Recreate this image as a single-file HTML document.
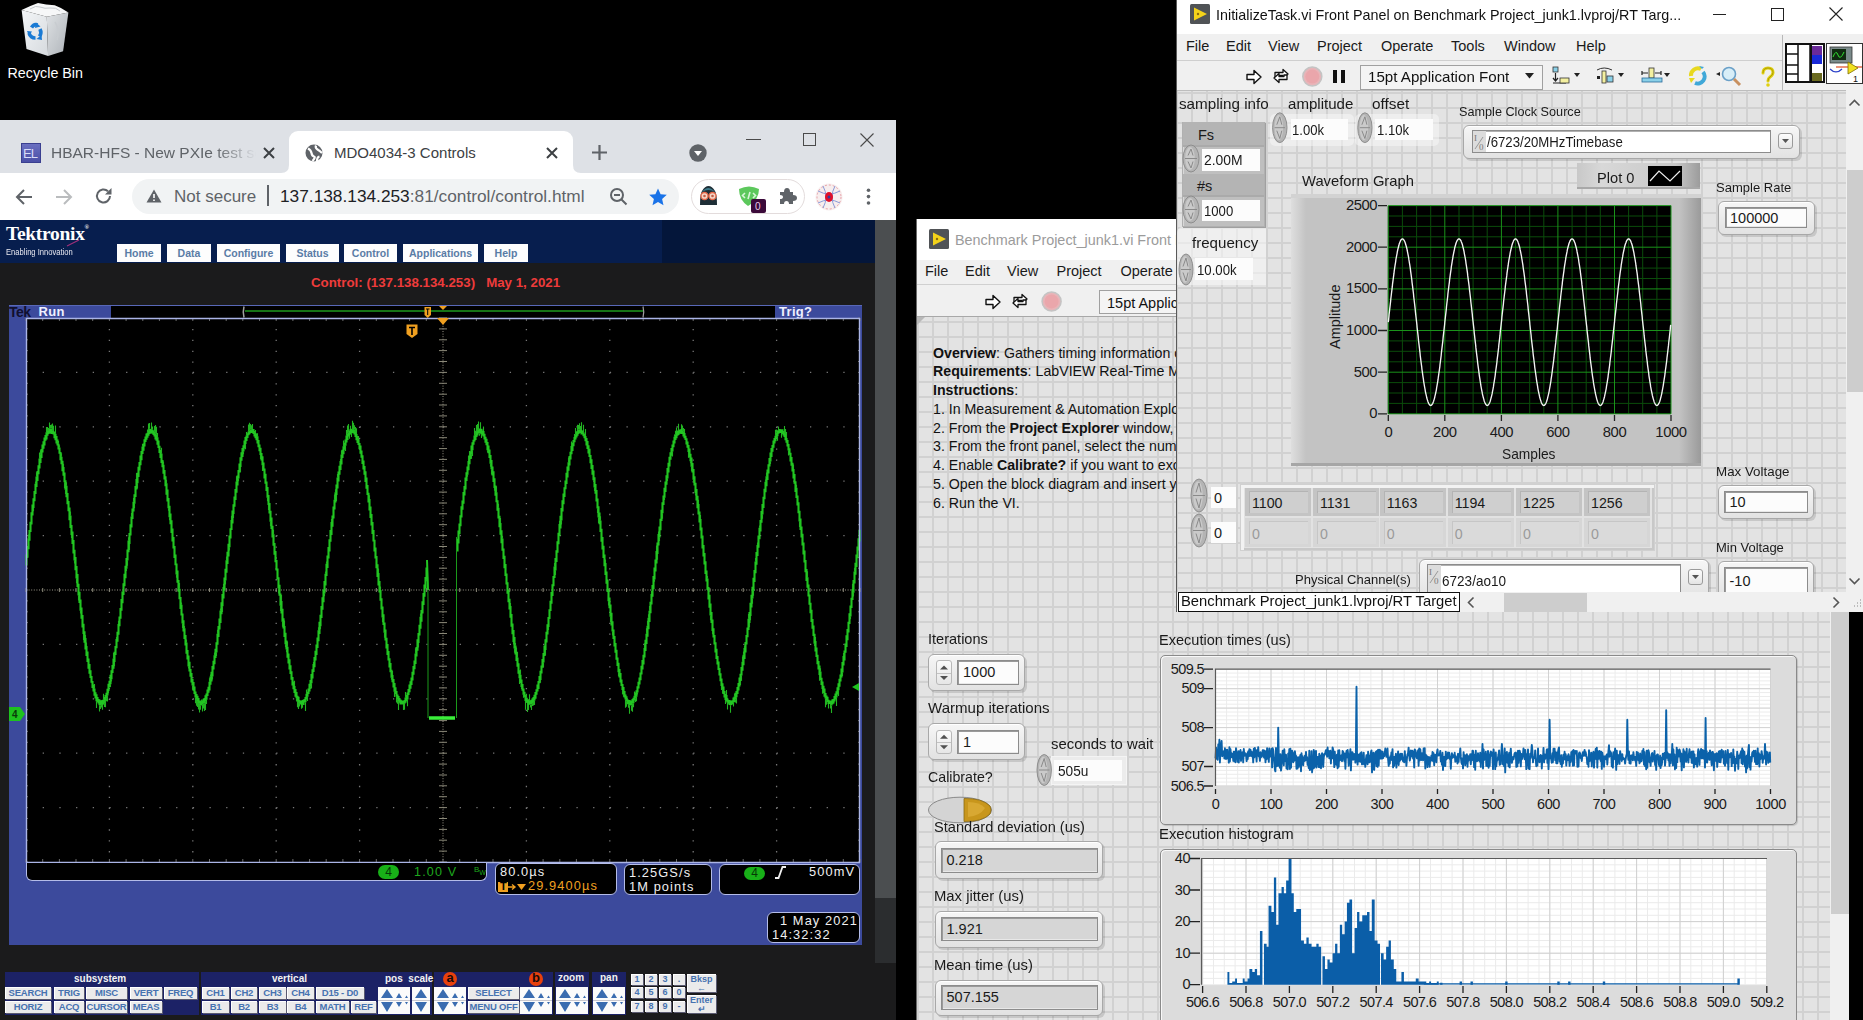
<!DOCTYPE html><html><head><meta charset="utf-8"><style>

*{margin:0;padding:0;box-sizing:border-box}
html,body{width:1863px;height:1020px;overflow:hidden;background:#000;font-family:"Liberation Sans",sans-serif}
.a{position:absolute}
.t{position:absolute;white-space:nowrap;line-height:1}
svg{position:absolute;overflow:visible}


.cw{left:0;top:120px;width:896px;height:900px;background:#1b1b1c;overflow:hidden}
.tabs{left:0;top:0;width:896px;height:53px;background:#dee1e6}
.tbar{left:0;top:53px;width:896px;height:47px;background:#fff}
.page{left:0;top:100px;width:875px;height:800px;background:#1b1b1c}
.tekhdr{left:0;top:0;width:875px;height:43px;background:#071e4e}
.tbtn{position:absolute;top:24px;height:18px;background:#fdfdfd;color:#5a7ca6;font-weight:bold;font-size:10.5px;text-align:center;line-height:19px}
.scope{left:9px;top:85px;width:853px;height:640px;background:#3c4a9c}


.lvlab{position:absolute;white-space:nowrap;line-height:1;font-size:14.5px;color:#1a1a1a}
.grid{position:absolute;background-color:#e3e3e3;
 background-image:linear-gradient(90deg,#d1d1d1 2px,transparent 2px),linear-gradient(#d1d1d1 2px,transparent 2px);
 background-size:15px 15px}






</style></head><body>

<div class="a" style="left:0;top:0;width:90px;height:90px">
 <svg width="90" height="90" style="left:0;top:0">
  <defs>
   <linearGradient id="rbl" x1="0" x2="1" y1="0" y2="1"><stop offset="0" stop-color="#f4f6f8"/><stop offset="1" stop-color="#d6dade"/></linearGradient>
   <linearGradient id="rbr" x1="0" x2="1" y1="0" y2="1"><stop offset="0" stop-color="#dfe2e5"/><stop offset="1" stop-color="#aeb3b8"/></linearGradient>
  </defs>
  <path d="M21.6 10.1L46.8 16.8L48.1 56L26.5 49Z" fill="url(#rbl)"/>
  <path d="M46.8 16.8L68.4 12.4L63.1 51.2L48.1 56Z" fill="url(#rbr)"/>
  <path d="M21.6 10.1Q30 6 38 3.1Q46 5 54.7 5.3Q62 8 68.4 12.4L46.8 16.8Z" fill="#f6f7f8"/>
  <path d="M30 9Q36 5 40 7Q45 9 50 8Q56 7 60 11" stroke="#c4c8cc" stroke-width="1" fill="none"/>
  <path d="M55 22Q60 30 57 40" stroke="#c8ccd0" stroke-width="1.5" fill="none"/>
  <g fill="none" stroke="#1a7ad4" stroke-width="3.6">
   <path d="M31.5 27.5Q34 23.5 37.5 25"/>
   <path d="M40 29Q42 33 39.5 36.5"/>
   <path d="M35.5 38Q30.5 38 29 33"/>
  </g>
  <path d="M36 22.5L40.5 26.5L35 28Z M41.5 35L36.5 39L42 40Z M27 31L29 36L32 31.5Z" fill="#1a7ad4"/>
 </svg>
 <div class="t" style="left:7.5px;top:66px;color:#fff;font-size:14.3px;text-shadow:0 0 2px #000">Recycle Bin</div>
</div>

<div class="a cw">
<div class="a tabs">
<div class="a" style="left:21px;top:23px;width:20px;height:20px;background:linear-gradient(#6a6fc0,#4a4fa6);border:1px solid #3a3f90"></div>
<div class="t" style="left:23px;top:27px;color:#d8dcf8;font-size:13px;letter-spacing:-1px">EL</div>
<div class="t" style="left:51px;top:25px;font-size:15.5px;color:#5f6368;width:205px;overflow:hidden;-webkit-mask-image:linear-gradient(90deg,#000 80%,transparent)">HBAR-HFS - New PXIe test set</div>
<svg style="left:263px;top:27px" width="12" height="12"><path d="M1 1L11 11M11 1L1 11" stroke="#3c4043" stroke-width="2"/></svg>
<div class="a" style="left:289px;top:11px;width:284px;height:42px;background:#fff;border-radius:9px 9px 0 0"></div>
<svg style="left:281px;top:45px" width="8" height="8"><path d="M0 8Q8 8 8 0V8Z" fill="#fff"/></svg>
<svg style="left:573px;top:45px" width="8" height="8"><path d="M8 8Q0 8 0 0V8Z" fill="#fff"/></svg>
<svg style="left:305px;top:24px" width="18" height="18" viewBox="0 0 18 18"><circle cx="9" cy="9" r="8.5" fill="#5f6368"/><path d="M3 4.5Q6 6 6.5 9T9 12.5T7.5 17M11 1.5Q10 4 12.5 5.5T17 9M12 17Q12 13 14.5 12.5" stroke="#fff" stroke-width="2.2" fill="none"/></svg>
<div class="t" style="left:334px;top:25px;font-size:15px;color:#3c4043">MDO4034-3 Controls</div>
<svg style="left:546px;top:27px" width="12" height="12"><path d="M1 1L11 11M11 1L1 11" stroke="#3c4043" stroke-width="2"/></svg>
<svg style="left:592px;top:25px" width="15" height="15"><path d="M7.5 0V15M0 7.5H15" stroke="#5f6368" stroke-width="2.2"/></svg>
<svg style="left:689px;top:24px" width="18" height="18"><circle cx="9" cy="9" r="8.7" fill="#5f6368"/><path d="M5 7H13L9 12Z" fill="#fff"/></svg>
<div class="a" style="left:746px;top:19px;width:15px;height:1px;background:#4a4a4a"></div>
<div class="a" style="left:803px;top:13px;width:13px;height:13px;border:1px solid #4a4a4a"></div>
<svg style="left:860px;top:13px" width="14" height="14"><path d="M0.5 0.5L13.5 13.5M13.5 0.5L0.5 13.5" stroke="#4a4a4a" stroke-width="1.1"/></svg>
</div>
<div class="a tbar">
<svg style="left:15px;top:15px" width="18" height="18" viewBox="0 0 18 18"><path d="M17 9H2.5M9 2L2 9L9 16" stroke="#5f6368" stroke-width="2" fill="none"/></svg>
<svg style="left:55px;top:15px" width="18" height="18" viewBox="0 0 18 18"><path d="M1 9H15.5M9 2L16 9L9 16" stroke="#babcbe" stroke-width="2" fill="none"/></svg>
<svg style="left:95px;top:14px" width="18" height="18" viewBox="0 0 18 18"><path d="M15 9A6.5 6.5 0 1 1 13 4.3" stroke="#5f6368" stroke-width="2" fill="none"/><path d="M16.5 1V7.5H10Z" fill="#5f6368"/></svg>
<div class="a" style="left:132px;top:6px;width:547px;height:35px;background:#f1f3f4;border-radius:18px"></div>
<svg style="left:146px;top:16px" width="16" height="14" viewBox="0 0 16 14"><path d="M8 0.5L15.5 13.5H0.5Z" fill="#5f6368"/><path d="M8 5V9M8 10.5V12" stroke="#fff" stroke-width="1.6"/></svg>
<div class="t" style="left:174px;top:15px;font-size:17px;color:#5f6368">Not secure</div>
<div class="a" style="left:267px;top:12px;width:2px;height:21px;background:#5f6368"></div>
<div class="t" style="left:280px;top:15px;font-size:17.3px;color:#202124">137.138.134.253<span style="color:#5f6368">:81/control/control.html</span></div>
<svg style="left:609px;top:14px" width="20" height="20" viewBox="0 0 20 20"><circle cx="8" cy="8" r="6" stroke="#5f6368" stroke-width="2" fill="none"/><path d="M5 8H11M12.5 12.5L17.5 17.5" stroke="#5f6368" stroke-width="2"/></svg>
<svg style="left:648px;top:14px" width="20" height="20" viewBox="0 0 20 20"><path d="M10 1.5L12.6 7.3L18.8 7.8L14.1 12L15.5 18.2L10 15L4.5 18.2L5.9 12L1.2 7.8L7.4 7.3Z" fill="#1a73e8"/></svg>
<div class="a" style="left:691px;top:6px;width:114px;height:35px;border:1px solid #e3dcdc;border-radius:18px"></div>
<svg style="left:698px;top:13px" width="21" height="20" viewBox="0 0 21 20"><path d="M2 19Q2 8 4 5Q7 0 10.5 0Q14 0 17 5Q19 8 19 19Z" fill="#1e2e36"/><path d="M4 6Q10 -2 17 6Q14 4 10.5 4Q7 4 4 6Z" fill="#3d7a8a"/><circle cx="6.5" cy="10" r="3.5" fill="#f6d6c8" stroke="#e86a4a" stroke-width="1.3"/><circle cx="14.5" cy="10" r="3.5" fill="#f6d6c8" stroke="#e86a4a" stroke-width="1.3"/><circle cx="6.5" cy="10" r="1.3" fill="#c0604a"/><circle cx="14.5" cy="10" r="1.3" fill="#c0604a"/></svg>
<svg style="left:738px;top:13px" width="22" height="21" viewBox="0 0 22 21"><path d="M1 3Q11 -2 21 3Q21 14 10 20Q1 14 1 3Z" fill="#5cc85c"/><path d="M7 7L4.5 9.5L7 12M15 7L17.5 9.5L15 12M12 6L10 13" stroke="#d8f5d8" stroke-width="1.6" fill="none"/></svg>
<div class="a" style="left:751px;top:26px;width:15px;height:14px;background:#3b0a3a;border-radius:2px"></div>
<div class="t" style="left:755px;top:29px;font-size:10px;color:#e8c8e8">0</div>
<svg style="left:780px;top:14px" width="18" height="18" viewBox="0 0 18 18"><path d="M0 5H4Q4 1 7 1Q10 1 10 5H13V8Q17 8 17 11Q17 14 13 14V17H9Q9 14 6.5 14Q4 14 4 17H0V12Q3 12 3 10Q3 8 0 8Z" fill="#5f6368"/></svg>
<svg style="left:815px;top:183px;top:10px" width="28" height="28" viewBox="0 0 28 28"><circle cx="14" cy="14" r="13.5" fill="#f7eeee"/><circle cx="14" cy="14" r="12" fill="none" stroke="#e8a0a8" stroke-width="1" stroke-dasharray="2 2"/><path d="M3 8Q14 14 25 8M3 20Q14 14 25 20M8 3Q14 14 8 25M20 3Q14 14 20 25" stroke="#8a9ad8" stroke-width="1" fill="none"/><ellipse cx="14" cy="14" rx="4" ry="5" fill="#e0102a"/><circle cx="14" cy="14" r="1.5" fill="#3040a0"/></svg>
<svg style="left:866px;top:15px" width="5" height="18"><circle cx="2.5" cy="2.2" r="1.8" fill="#5f6368"/><circle cx="2.5" cy="8.6" r="1.8" fill="#5f6368"/><circle cx="2.5" cy="15" r="1.8" fill="#5f6368"/></svg>
</div>
<div class="a page">
<div class="a tekhdr">
<div class="tbtn" style="left:117px;width:44px">Home</div><div class="tbtn" style="left:167px;width:44px">Data</div><div class="tbtn" style="left:217px;width:63px">Configure</div><div class="tbtn" style="left:286px;width:53px">Status</div><div class="tbtn" style="left:344px;width:53px">Control</div><div class="tbtn" style="left:403px;width:75px">Applications</div><div class="tbtn" style="left:484px;width:44px">Help</div>
</div>
<div class="a" style="left:0;top:-220px;width:1863px;height:1020px">
<div class="a" style="left:662px;top:220px;width:213px;height:43px;background:#04163a"></div>
<div class="t" style="left:6px;top:224px;color:#fff;font-family:'Liberation Serif',serif;font-weight:bold;font-size:19.5px;letter-spacing:-0.3px">Tektronix<span style="font-size:6px;vertical-align:top">&reg;</span></div>
<div class="t" style="left:6px;top:247px;color:#e8e8f0;font-size:9.5px;transform:scaleX(0.8);transform-origin:0 0">Enabling Innovation</div>
<svg style="left:66px;top:239px" width="14" height="8"><path d="M1 7L13 1" stroke="#a0307a" stroke-width="1.2"/></svg>
<div class="t" style="left:311px;top:276px;color:#ee3b3b;font-weight:bold;font-size:13.3px">Control: (137.138.134.253)&nbsp;&nbsp; May 1, 2021</div>
<div class="a" style="left:9px;top:305px;width:853px;height:640px;background:#3c4a9c"></div>
<div class="a" style="left:111px;top:306px;width:664px;height:12px;background:#000"></div>
<div class="a" style="left:9px;top:305px;width:853px;height:1px;background:#5868b8"></div>
<div class="t" style="left:9px;top:305px;color:#101030;font-size:14px;font-weight:bold;letter-spacing:-0.5px">Tek</div>
<div class="t" style="left:38.5px;top:304.7px;color:#f0f0ff;font-size:13px;font-weight:bold;letter-spacing:0.3px">Run</div>
<div class="t" style="left:779px;top:304.7px;color:#f0f0ff;font-size:13px;font-weight:bold;letter-spacing:0.3px">Trig?</div>
<svg style="left:0;top:0" width="900" height="400"><path d="M244 306.5Q242.5 312 244 317.5" stroke="#a0a0a0" stroke-width="1.5" fill="none"/><path d="M245 311H643" stroke="#1e9a1e" stroke-width="1.4"/><path d="M643 306.5Q644.5 312 643 317.5" stroke="#a0a0a0" stroke-width="1.2" fill="none"/><path d="M439 306H447L443 310Z" fill="#f0a020"/><path d="M424.5 307H431V315L427.7 318L424.5 315Z" fill="#f0a020"/><path d="M426 309H429.5M427.7 309V315" stroke="#000" stroke-width="1"/></svg>
<svg style="left:0;top:0" width="1863" height="1020">
<rect x="26" y="318" width="834" height="544" fill="#000"/>
<path d="M109.4 318V862M192.8 318V862M276.2 318V862M359.6 318V862M526.4 318V862M609.8 318V862M693.2 318V862M776.6 318V862" stroke="#767676" stroke-width="1.3" stroke-dasharray="1.3 9.58"/>
<path d="M26 372.4H860M26 426.8H860M26 481.2H860M26 535.6H860M26 644.4H860M26 698.8H860M26 753.2H860M26 807.6H860" stroke="#767676" stroke-width="1.3" stroke-dasharray="1.3 15.38"/>
<path d="M443.0 318V862M26 590.0H860" stroke="#9a9688" stroke-width="1" stroke-dasharray="1 1.6"/>
<path d="M439.0 318.0h8M439.0 328.9h8M439.0 339.8h8M439.0 350.6h8M439.0 361.5h8M439.0 372.4h8M439.0 383.3h8M439.0 394.2h8M439.0 405.0h8M439.0 415.9h8M439.0 426.8h8M439.0 437.7h8M439.0 448.6h8M439.0 459.4h8M439.0 470.3h8M439.0 481.2h8M439.0 492.1h8M439.0 503.0h8M439.0 513.8h8M439.0 524.7h8M439.0 535.6h8M439.0 546.5h8M439.0 557.4h8M439.0 568.2h8M439.0 579.1h8M439.0 590.0h8M439.0 600.9h8M439.0 611.8h8M439.0 622.6h8M439.0 633.5h8M439.0 644.4h8M439.0 655.3h8M439.0 666.2h8M439.0 677.0h8M439.0 687.9h8M439.0 698.8h8M439.0 709.7h8M439.0 720.6h8M439.0 731.4h8M439.0 742.3h8M439.0 753.2h8M439.0 764.1h8M439.0 775.0h8M439.0 785.8h8M439.0 796.7h8M439.0 807.6h8M439.0 818.5h8M439.0 829.4h8M439.0 840.2h8M439.0 851.1h8M439.0 862.0h8M26.0 588.0v4M42.7 588.0v4M59.4 588.0v4M76.0 588.0v4M92.7 588.0v4M109.4 588.0v4M126.1 588.0v4M142.8 588.0v4M159.4 588.0v4M176.1 588.0v4M192.8 588.0v4M209.5 588.0v4M226.2 588.0v4M242.8 588.0v4M259.5 588.0v4M276.2 588.0v4M292.9 588.0v4M309.6 588.0v4M326.2 588.0v4M342.9 588.0v4M359.6 588.0v4M376.3 588.0v4M393.0 588.0v4M409.6 588.0v4M426.3 588.0v4M443.0 588.0v4M459.7 588.0v4M476.4 588.0v4M493.0 588.0v4M509.7 588.0v4M526.4 588.0v4M543.1 588.0v4M559.8 588.0v4M576.4 588.0v4M593.1 588.0v4M609.8 588.0v4M626.5 588.0v4M643.2 588.0v4M659.8 588.0v4M676.5 588.0v4M693.2 588.0v4M709.9 588.0v4M726.6 588.0v4M743.2 588.0v4M759.9 588.0v4M776.6 588.0v4M793.3 588.0v4M810.0 588.0v4M826.6 588.0v4M843.3 588.0v4M860.0 588.0v4" stroke="#8a8878" stroke-width="1"/>
<path d="M26 318.0h2M858 318.0h2M26 328.9h2M858 328.9h2M26 339.8h2M858 339.8h2M26 350.6h2M858 350.6h2M26 361.5h2M858 361.5h2M26 372.4h2M858 372.4h2M26 383.3h2M858 383.3h2M26 394.2h2M858 394.2h2M26 405.0h2M858 405.0h2M26 415.9h2M858 415.9h2M26 426.8h2M858 426.8h2M26 437.7h2M858 437.7h2M26 448.6h2M858 448.6h2M26 459.4h2M858 459.4h2M26 470.3h2M858 470.3h2M26 481.2h2M858 481.2h2M26 492.1h2M858 492.1h2M26 503.0h2M858 503.0h2M26 513.8h2M858 513.8h2M26 524.7h2M858 524.7h2M26 535.6h2M858 535.6h2M26 546.5h2M858 546.5h2M26 557.4h2M858 557.4h2M26 568.2h2M858 568.2h2M26 579.1h2M858 579.1h2M26 590.0h2M858 590.0h2M26 600.9h2M858 600.9h2M26 611.8h2M858 611.8h2M26 622.6h2M858 622.6h2M26 633.5h2M858 633.5h2M26 644.4h2M858 644.4h2M26 655.3h2M858 655.3h2M26 666.2h2M858 666.2h2M26 677.0h2M858 677.0h2M26 687.9h2M858 687.9h2M26 698.8h2M858 698.8h2M26 709.7h2M858 709.7h2M26 720.6h2M858 720.6h2M26 731.4h2M858 731.4h2M26 742.3h2M858 742.3h2M26 753.2h2M858 753.2h2M26 764.1h2M858 764.1h2M26 775.0h2M858 775.0h2M26 785.8h2M858 785.8h2M26 796.7h2M858 796.7h2M26 807.6h2M858 807.6h2M26 818.5h2M858 818.5h2M26 829.4h2M858 829.4h2M26 840.2h2M858 840.2h2M26 851.1h2M858 851.1h2M26 862.0h2M858 862.0h2M26.0 318v3M26.0 859v3M42.7 318v3M42.7 859v3M59.4 318v3M59.4 859v3M76.0 318v3M76.0 859v3M92.7 318v3M92.7 859v3M109.4 318v3M109.4 859v3M126.1 318v3M126.1 859v3M142.8 318v3M142.8 859v3M159.4 318v3M159.4 859v3M176.1 318v3M176.1 859v3M192.8 318v3M192.8 859v3M209.5 318v3M209.5 859v3M226.2 318v3M226.2 859v3M242.8 318v3M242.8 859v3M259.5 318v3M259.5 859v3M276.2 318v3M276.2 859v3M292.9 318v3M292.9 859v3M309.6 318v3M309.6 859v3M326.2 318v3M326.2 859v3M342.9 318v3M342.9 859v3M359.6 318v3M359.6 859v3M376.3 318v3M376.3 859v3M393.0 318v3M393.0 859v3M409.6 318v3M409.6 859v3M426.3 318v3M426.3 859v3M443.0 318v3M443.0 859v3M459.7 318v3M459.7 859v3M476.4 318v3M476.4 859v3M493.0 318v3M493.0 859v3M509.7 318v3M509.7 859v3M526.4 318v3M526.4 859v3M543.1 318v3M543.1 859v3M559.8 318v3M559.8 859v3M576.4 318v3M576.4 859v3M593.1 318v3M593.1 859v3M609.8 318v3M609.8 859v3M626.5 318v3M626.5 859v3M643.2 318v3M643.2 859v3M659.8 318v3M659.8 859v3M676.5 318v3M676.5 859v3M693.2 318v3M693.2 859v3M709.9 318v3M709.9 859v3M726.6 318v3M726.6 859v3M743.2 318v3M743.2 859v3M759.9 318v3M759.9 859v3M776.6 318v3M776.6 859v3M793.3 318v3M793.3 859v3M810.0 318v3M810.0 859v3M826.6 318v3M826.6 859v3M843.3 318v3M843.3 859v3M860.0 318v3M860.0 859v3" stroke="#6a6a6a" stroke-width="1"/>
<path d="M26.5 554.6V565.5M27.5 546.6V557.7M28.5 538.2V549.2M29.5 529.9V540.7M30.5 521.7V532.0M31.5 512.3V524.6M32.5 504.5V515.6M33.5 498.2V508.1M34.5 491.1V501.3M35.5 483.8V494.0M36.5 476.6V486.9M37.5 471.0V480.9M38.5 465.2V474.2M39.5 458.5V468.5M40.5 454.2V463.1M41.5 449.1V458.0M42.5 444.5V452.5M43.5 441.3V448.7M44.5 437.5V445.6M45.5 435.1V440.8M46.5 432.2V439.4M47.5 431.1V435.7M48.5 430.9V434.0M49.5 428.8V432.8M50.5 428.6V433.4M51.5 428.6V433.9M52.5 430.2V433.5M53.5 431.0V434.5M54.5 431.9V438.2M55.5 433.8V440.2M56.5 435.9V443.5M57.5 439.6V445.6M58.5 443.7V449.4M59.5 447.6V453.7M60.5 452.1V460.2M61.5 456.7V464.3M62.5 460.7V471.3M63.5 467.1V475.8M64.5 472.5V482.3M65.5 480.2V489.8M66.5 485.7V497.2M67.5 492.9V504.2M68.5 501.1V511.3M69.5 507.5V520.3M70.5 515.6V528.1M71.5 525.1V535.0M72.5 531.6V544.1M73.5 539.9V553.4M74.5 549.7V560.6M75.5 556.9V570.2M76.5 565.9V578.6M77.5 574.1V587.0M78.5 583.7V595.4M79.5 591.7V603.0M80.5 599.4V610.8M81.5 607.4V618.7M82.5 615.1V627.4M83.5 623.7V634.1M84.5 631.3V642.8M85.5 638.0V649.6M86.5 646.1V655.9M87.5 651.6V661.9M88.5 658.6V668.8M89.5 664.0V673.7M90.5 670.3V678.1M91.5 676.1V682.8M92.5 680.9V688.0M93.5 684.5V691.5M94.5 688.4V695.7M95.5 692.2V698.6M96.5 694.2V701.2M97.5 697.1V702.3M98.5 698.9V703.6M99.5 699.6V705.2M100.5 700.2V705.3M101.5 701.1V703.9M102.5 699.9V704.9M103.5 699.6V704.3M104.5 697.1V703.2M105.5 695.0V699.9M106.5 692.7V698.2M107.5 688.8V695.4M108.5 683.8V691.1M109.5 680.7V687.3M110.5 674.8V684.3M111.5 670.2V679.3M112.5 664.9V673.0M113.5 658.5V668.7M114.5 651.7V662.0M115.5 646.1V655.1M116.5 639.1V648.3M117.5 631.7V641.7M118.5 624.1V634.7M119.5 616.4V626.3M120.5 607.9V618.8M121.5 599.0V610.7M122.5 591.6V603.2M123.5 583.3V594.9M124.5 573.8V586.2M125.5 565.8V578.3M126.5 557.9V568.7M127.5 549.6V560.4M128.5 540.4V552.2M129.5 533.1V544.1M130.5 524.2V535.4M131.5 516.6V527.4M132.5 508.4V519.1M133.5 501.7V511.4M134.5 494.3V503.8M135.5 485.9V497.1M136.5 478.9V489.5M137.5 472.7V483.2M138.5 466.8V476.9M139.5 462.0V470.5M140.5 455.5V465.3M141.5 451.1V460.2M142.5 446.5V454.1M143.5 443.6V450.8M144.5 439.2V446.5M145.5 436.5V441.9M146.5 433.5V439.8M147.5 432.8V437.8M148.5 431.0V435.8M149.5 428.8V434.0M150.5 429.0V433.6M151.5 430.1V432.2M152.5 429.8V433.7M153.5 430.6V435.1M154.5 431.8V436.6M155.5 433.8V439.5M156.5 434.6V440.7M157.5 437.3V444.7M158.5 440.6V448.1M159.5 445.8V452.9M160.5 450.1V458.1M161.5 453.4V463.0M162.5 460.1V467.2M163.5 464.8V473.7M164.5 470.0V479.4M165.5 476.3V486.3M166.5 483.2V494.7M167.5 489.6V501.4M168.5 497.9V508.3M169.5 505.7V517.2M170.5 513.6V524.2M171.5 520.3V533.1M172.5 528.4V541.6M173.5 537.0V548.4M174.5 545.9V558.1M175.5 554.6V565.3M176.5 563.4V574.6M177.5 570.4V582.7M178.5 580.1V591.7M179.5 588.8V599.3M180.5 597.0V608.9M181.5 604.8V615.5M182.5 613.5V623.6M183.5 620.2V631.6M184.5 628.3V638.9M185.5 634.9V645.6M186.5 642.6V653.8M187.5 649.9V659.5M188.5 655.6V666.4M189.5 661.7V671.5M190.5 669.0V676.7M191.5 672.9V682.5M192.5 678.9V685.6M193.5 682.1V690.8M194.5 686.5V693.9M195.5 691.4V697.5M196.5 694.0V698.9M197.5 695.8V700.9M198.5 698.1V703.0M199.5 700.7V703.8M200.5 700.5V705.3M201.5 701.7V705.5M202.5 700.3V704.5M203.5 698.7V703.5M204.5 698.0V703.2M205.5 695.3V701.3M206.5 693.4V699.7M207.5 689.4V696.1M208.5 686.8V692.8M209.5 681.8V690.4M210.5 676.6V684.8M211.5 671.7V681.6M212.5 666.1V676.6M213.5 660.7V669.6M214.5 655.2V664.3M215.5 648.8V658.1M216.5 642.2V652.6M217.5 633.7V644.8M218.5 626.1V637.1M219.5 618.4V629.4M220.5 610.6V623.0M221.5 602.3V614.2M222.5 594.1V606.2M223.5 586.9V598.6M224.5 577.6V590.6M225.5 568.8V580.6M226.5 560.2V572.8M227.5 551.8V563.9M228.5 543.7V556.5M229.5 535.6V547.2M230.5 528.3V538.6M231.5 519.9V530.1M232.5 510.6V523.5M233.5 504.2V514.1M234.5 496.4V506.7M235.5 488.9V500.0M236.5 481.6V492.8M237.5 475.5V485.4M238.5 470.0V478.6M239.5 463.4V472.5M240.5 457.3V467.0M241.5 452.2V460.8M242.5 448.0V457.1M243.5 445.2V451.6M244.5 440.6V448.6M245.5 436.9V444.0M246.5 435.6V441.1M247.5 433.3V437.9M248.5 431.6V435.3M249.5 430.5V434.2M250.5 429.3V432.6M251.5 429.3V433.0M252.5 429.0V433.1M253.5 429.0V433.9M254.5 431.0V436.4M255.5 432.9V438.2M256.5 433.7V440.3M257.5 436.3V443.4M258.5 440.0V447.3M259.5 444.4V451.3M260.5 447.7V454.9M261.5 452.9V460.5M262.5 456.3V465.3M263.5 462.5V470.8M264.5 468.4V478.5M265.5 473.8V483.7M266.5 481.4V490.9M267.5 487.1V497.7M268.5 495.1V505.0M269.5 503.1V513.4M270.5 510.8V521.8M271.5 517.6V528.9M272.5 525.7V537.4M273.5 534.2V545.7M274.5 542.9V554.7M275.5 550.9V562.2M276.5 560.1V570.6M277.5 568.6V579.6M278.5 577.2V588.5M279.5 584.8V595.8M280.5 593.4V605.7M281.5 601.0V613.6M282.5 608.8V621.7M283.5 618.3V628.4M284.5 625.9V636.9M285.5 632.8V644.2M286.5 640.4V649.6M287.5 646.7V657.8M288.5 653.6V663.6M289.5 659.3V669.4M290.5 665.2V674.1M291.5 671.2V679.7M292.5 676.9V685.5M293.5 681.4V689.3M294.5 686.0V693.0M295.5 688.9V696.7M296.5 692.1V698.3M297.5 695.8V701.1M298.5 696.8V702.0M299.5 700.1V702.9M300.5 700.7V704.0M301.5 701.7V704.9M302.5 700.1V704.2M303.5 699.8V705.0M304.5 699.0V702.5M305.5 696.9V702.2M306.5 693.7V699.6M307.5 691.7V696.8M308.5 688.4V694.0M309.5 683.8V691.4M310.5 680.0V686.8M311.5 674.0V683.2M312.5 669.3V678.4M313.5 664.0V671.9M314.5 657.0V667.3M315.5 650.7V660.5M316.5 644.4V655.0M317.5 637.6V647.9M318.5 630.3V641.3M319.5 621.8V634.0M320.5 614.7V626.3M321.5 606.1V618.1M322.5 597.3V609.7M323.5 589.5V602.2M324.5 581.0V593.4M325.5 573.7V585.6M326.5 563.7V576.1M327.5 555.6V568.1M328.5 547.1V558.6M329.5 539.3V551.4M330.5 530.1V541.7M331.5 521.9V535.0M332.5 515.5V526.7M333.5 506.6V518.6M334.5 499.7V509.5M335.5 492.3V502.5M336.5 484.6V495.1M337.5 477.6V488.6M338.5 471.4V481.4M339.5 465.8V474.8M340.5 461.0V469.9M341.5 454.6V464.5M342.5 449.8V457.9M343.5 446.3V454.3M344.5 442.7V449.8M345.5 439.5V445.8M346.5 435.4V442.4M347.5 433.7V440.0M348.5 432.5V436.4M349.5 430.4V434.9M350.5 429.1V434.2M351.5 428.7V433.3M352.5 429.2V432.3M353.5 430.0V433.2M354.5 429.7V434.5M355.5 432.0V437.0M356.5 434.1V440.2M357.5 436.1V443.0M358.5 438.9V445.0M359.5 443.0V449.2M360.5 445.6V453.7M361.5 450.4V457.8M362.5 455.2V464.1M363.5 460.4V469.4M364.5 466.0V474.8M365.5 471.2V482.1M366.5 477.6V488.7M367.5 485.0V495.0M368.5 492.7V502.5M369.5 498.9V510.5M370.5 506.6V517.9M371.5 513.9V525.5M372.5 522.1V534.0M373.5 529.9V541.6M374.5 539.7V551.4M375.5 547.4V558.6M376.5 555.9V568.2M377.5 564.2V576.9M378.5 573.1V585.6M379.5 581.0V592.6M380.5 590.1V600.8M381.5 598.3V609.6M382.5 606.6V617.4M383.5 614.3V625.1M384.5 622.4V632.7M385.5 629.6V640.5M386.5 637.7V648.5M387.5 644.0V655.0M388.5 651.1V660.5M389.5 658.2V667.6M390.5 662.9V672.2M391.5 669.7V677.8M392.5 674.9V682.3M393.5 679.1V687.5M394.5 683.0V691.8M395.5 687.2V693.9M396.5 691.0V696.7M397.5 694.6V699.3M398.5 696.1V701.7M399.5 698.1V702.8M400.5 699.5V704.6M401.5 700.3V704.1M402.5 700.7V704.6M403.5 700.9V704.1M404.5 700.0V703.8M405.5 697.5V702.7M406.5 695.1V701.2M407.5 692.6V699.4M408.5 688.9V695.0M409.5 684.6V692.3M410.5 681.2V688.8M411.5 677.4V685.0M412.5 671.7V680.6M413.5 665.9V674.8M414.5 660.5V669.2M415.5 653.6V663.9M416.5 647.0V656.6M417.5 639.2V650.7M418.5 633.1V643.1M419.5 624.8V635.4M420.5 616.8V628.8M421.5 610.1V621.7M422.5 601.2V613.5M423.5 593.0V605.1M424.5 584.5V596.8M425.5 576.9V588.5M426.5 567.4V579.0M457.5 538.7V551.5M458.5 530.6V543.4M459.5 523.4V534.2M460.5 515.3V526.2M461.5 506.3V517.5M462.5 500.4V509.8M463.5 492.1V503.7M464.5 486.0V495.4M465.5 477.6V489.4M466.5 472.2V481.1M467.5 466.5V474.8M468.5 461.1V470.3M469.5 456.0V464.2M470.5 451.2V459.1M471.5 445.4V454.2M472.5 442.3V450.2M473.5 439.7V444.7M474.5 435.4V441.5M475.5 434.2V440.0M476.5 431.9V437.1M477.5 431.0V435.6M478.5 429.3V433.6M479.5 428.5V433.5M480.5 428.9V433.6M481.5 428.7V434.4M482.5 430.6V435.4M483.5 431.1V436.6M484.5 433.7V439.5M485.5 436.8V442.8M486.5 438.7V445.2M487.5 441.9V450.2M488.5 445.5V453.2M489.5 449.6V458.1M490.5 454.9V463.7M491.5 459.9V469.3M492.5 466.5V475.6M493.5 471.3V481.9M494.5 478.3V488.0M495.5 485.4V495.7M496.5 492.2V502.3M497.5 500.2V510.8M498.5 507.7V518.5M499.5 515.8V527.2M500.5 523.0V534.7M501.5 530.3V543.3M502.5 538.6V550.8M503.5 548.6V558.9M504.5 555.7V568.2M505.5 564.1V576.0M506.5 573.6V584.6M507.5 582.3V593.8M508.5 589.5V602.3M509.5 598.7V609.6M510.5 606.0V617.8M511.5 614.1V626.8M512.5 623.5V634.2M513.5 630.1V642.0M514.5 636.9V648.5M515.5 645.5V654.6M516.5 652.1V660.9M517.5 657.5V666.8M518.5 663.2V673.7M519.5 670.3V678.2M520.5 674.7V683.1M521.5 679.5V686.9M522.5 684.0V690.8M523.5 688.5V694.7M524.5 691.8V697.2M525.5 694.7V701.0M526.5 697.6V702.8M527.5 699.2V703.0M528.5 699.2V705.1M529.5 700.3V703.9M530.5 700.5V704.4M531.5 699.7V704.5M532.5 698.3V703.2M533.5 696.9V701.9M534.5 694.7V700.6M535.5 691.9V698.7M536.5 689.3V694.7M537.5 684.6V691.4M538.5 681.0V689.0M539.5 675.9V683.2M540.5 670.8V680.0M541.5 665.4V673.5M542.5 659.0V667.7M543.5 652.9V662.6M544.5 645.5V655.9M545.5 639.3V650.0M546.5 631.8V642.5M547.5 624.2V634.4M548.5 617.0V627.1M549.5 609.3V619.1M550.5 600.8V611.0M551.5 591.9V603.7M552.5 584.3V596.1M553.5 575.9V586.3M554.5 566.6V578.1M555.5 557.9V570.6M556.5 550.2V562.0M557.5 541.3V552.8M558.5 532.7V544.3M559.5 524.1V535.9M560.5 515.7V528.5M561.5 508.1V520.5M562.5 500.2V511.6M563.5 493.4V504.2M564.5 487.3V496.9M565.5 480.6V489.3M566.5 472.8V483.9M567.5 466.6V477.4M568.5 462.3V470.8M569.5 456.1V465.6M570.5 451.8V459.6M571.5 446.1V454.3M572.5 442.8V451.1M573.5 439.9V446.3M574.5 437.1V442.2M575.5 434.4V439.4M576.5 431.4V437.6M577.5 431.1V435.8M578.5 429.5V433.9M579.5 429.8V433.1M580.5 430.2V432.6M581.5 429.9V434.4M582.5 430.8V434.0M583.5 432.2V436.3M584.5 433.8V438.3M585.5 436.0V441.3M586.5 438.0V445.5M587.5 441.0V449.1M588.5 445.3V453.4M589.5 448.7V456.9M590.5 455.1V463.2M591.5 459.3V469.1M592.5 465.0V474.7M593.5 470.6V480.3M594.5 477.2V487.6M595.5 484.0V493.8M596.5 490.1V501.4M597.5 498.6V508.6M598.5 506.3V517.5M599.5 512.5V524.2M600.5 520.6V532.0M601.5 528.7V541.7M602.5 536.9V549.6M603.5 545.8V557.9M604.5 554.5V566.3M605.5 562.9V575.1M606.5 571.6V583.7M607.5 579.4V592.0M608.5 588.4V601.3M609.5 597.6V608.3M610.5 604.6V616.7M611.5 612.7V625.4M612.5 621.3V631.6M613.5 629.4V639.1M614.5 636.0V646.5M615.5 643.1V652.8M616.5 649.7V659.7M617.5 657.6V665.9M618.5 662.7V672.3M619.5 669.0V677.6M620.5 673.0V682.4M621.5 679.5V686.1M622.5 684.0V690.0M623.5 687.1V694.8M624.5 691.1V697.6M625.5 694.5V699.4M626.5 696.2V701.5M627.5 699.2V704.0M628.5 700.0V704.5M629.5 700.1V705.3M630.5 700.6V704.3M631.5 700.5V705.4M632.5 699.0V703.4M633.5 697.7V703.3M634.5 695.7V700.5M635.5 692.6V698.6M636.5 690.2V696.7M637.5 686.3V692.5M638.5 681.8V688.5M639.5 677.6V684.5M640.5 672.5V680.2M641.5 665.8V674.6M642.5 660.0V669.5M643.5 654.7V664.6M644.5 648.0V657.4M645.5 639.8V651.1M646.5 633.8V644.1M647.5 625.8V636.8M648.5 617.8V629.3M649.5 610.7V622.1M650.5 601.8V613.2M651.5 594.0V604.6M652.5 584.9V596.7M653.5 576.1V589.2M654.5 567.6V579.5M655.5 559.5V571.4M656.5 551.0V563.5M657.5 542.6V554.1M658.5 534.1V545.4M659.5 526.6V537.6M660.5 518.7V530.2M661.5 509.8V521.1M662.5 502.2V513.3M663.5 495.5V505.1M664.5 487.7V497.7M665.5 481.6V492.1M666.5 475.3V484.8M667.5 467.9V478.5M668.5 462.7V472.6M669.5 456.8V466.6M670.5 452.3V459.8M671.5 447.9V455.7M672.5 444.4V451.6M673.5 440.5V447.2M674.5 436.8V443.6M675.5 434.6V439.9M676.5 432.0V438.2M677.5 430.8V435.7M678.5 430.2V434.9M679.5 429.6V433.8M680.5 429.9V433.1M681.5 428.9V434.0M682.5 430.2V434.0M683.5 431.6V436.5M684.5 433.1V438.3M685.5 435.7V440.1M686.5 438.3V444.6M687.5 441.5V447.8M688.5 445.0V452.1M689.5 448.4V457.4M690.5 453.7V461.2M691.5 457.6V466.8M692.5 463.0V472.4M693.5 469.0V479.7M694.5 476.2V485.6M695.5 482.7V493.3M696.5 489.1V500.5M697.5 495.8V508.3M698.5 504.1V514.6M699.5 511.4V522.5M700.5 518.9V530.5M701.5 527.4V538.6M702.5 535.5V548.4M703.5 544.9V556.6M704.5 553.1V564.6M705.5 561.2V574.0M706.5 570.6V581.5M707.5 578.4V590.1M708.5 587.0V599.6M709.5 594.7V607.8M710.5 603.4V615.6M711.5 612.0V623.1M712.5 619.6V631.0M713.5 628.2V637.6M714.5 634.9V644.6M715.5 642.2V652.4M716.5 648.8V658.9M717.5 656.1V664.4M718.5 661.5V670.1M719.5 667.9V675.5M720.5 673.3V681.3M721.5 678.4V686.0M722.5 683.2V689.8M723.5 686.4V693.9M724.5 690.9V697.6M725.5 694.0V699.9M726.5 695.1V701.6M727.5 698.5V702.8M728.5 700.1V703.7M729.5 700.0V704.9M730.5 700.5V705.3M731.5 701.0V705.1M732.5 700.3V703.9M733.5 697.6V702.2M734.5 696.6V702.2M735.5 692.7V699.5M736.5 690.9V697.2M737.5 686.9V693.9M738.5 683.1V690.6M739.5 677.5V686.4M740.5 673.7V681.0M741.5 666.9V675.4M742.5 661.8V670.8M743.5 654.7V665.2M744.5 648.1V659.0M745.5 642.0V652.4M746.5 635.0V644.5M747.5 627.6V637.3M748.5 618.7V629.9M749.5 612.1V623.0M750.5 602.8V616.0M751.5 594.7V607.5M752.5 586.7V598.5M753.5 577.7V590.7M754.5 570.0V582.1M755.5 561.4V573.2M756.5 552.1V564.8M757.5 545.0V555.9M758.5 535.4V547.8M759.5 527.7V539.2M760.5 520.1V531.6M761.5 511.0V522.8M762.5 503.9V514.4M763.5 496.8V507.9M764.5 488.7V499.2M765.5 481.7V492.3M766.5 476.2V486.2M767.5 469.4V479.9M768.5 464.3V473.4M769.5 458.1V466.4M770.5 452.5V461.4M771.5 447.9V456.9M772.5 445.0V451.7M773.5 440.5V447.7M774.5 437.9V443.4M775.5 435.7V441.2M776.5 432.6V437.9M777.5 430.3V436.3M778.5 430.3V433.8M779.5 428.9V432.6M780.5 429.3V433.0M781.5 429.2V432.9M782.5 429.3V433.9M783.5 430.9V435.4M784.5 433.0V437.0M785.5 434.0V440.2M786.5 437.9V442.8M787.5 440.0V446.5M788.5 443.9V450.5M789.5 448.3V454.8M790.5 452.7V461.5M791.5 457.0V465.7M792.5 462.7V471.5M793.5 469.1V478.4M794.5 473.9V483.7M795.5 481.2V492.1M796.5 487.7V498.0M797.5 495.6V505.4M798.5 502.3V513.3M799.5 510.7V521.6M800.5 518.5V530.1M801.5 526.6V537.5M802.5 533.7V545.6M803.5 542.6V554.6M804.5 550.6V562.6M805.5 560.0V572.2M806.5 568.9V580.9M807.5 577.2V587.8M808.5 584.5V596.4M809.5 594.4V604.7M810.5 602.7V613.2M811.5 609.7V622.1M812.5 618.9V628.7M813.5 625.4V635.9M814.5 633.8V643.8M815.5 640.9V651.6M816.5 647.6V656.9M817.5 654.8V664.2M818.5 661.1V669.4M819.5 665.6V674.9M820.5 671.4V679.9M821.5 677.7V685.0M822.5 681.5V688.9M823.5 685.7V693.0M824.5 688.6V696.8M825.5 692.9V698.5M826.5 695.6V700.8M827.5 696.8V701.9M828.5 699.8V704.1M829.5 701.1V703.9M830.5 700.4V703.9M831.5 701.2V705.5M832.5 699.3V704.3M833.5 698.9V703.5M834.5 696.0V701.6M835.5 693.5V699.5M836.5 691.3V697.5M837.5 687.3V694.6M838.5 683.3V690.2M839.5 678.8V686.7M840.5 674.4V681.6M841.5 668.6V677.6M842.5 662.1V672.6M843.5 656.1V665.5M844.5 650.4V660.6M845.5 643.4V652.8M846.5 635.3V647.1M847.5 628.9V640.2M848.5 621.8V632.5M849.5 613.2V624.1M850.5 605.5V616.5M851.5 597.8V608.0M852.5 589.0V600.1M853.5 579.9V592.7M854.5 571.5V583.4M855.5 562.8V574.7M856.5 554.4V567.1M857.5 546.4V558.2M858.5 538.3V550.4M859.5 529.7V541.5" stroke="#22c622" stroke-width="2.1"/>
<path d="M28.5 534.5V538.2M33.5 508.1V511.3M35.5 481.6V483.8M36.5 472.3V476.6M39.5 452.6V458.5M40.5 450.3V454.2M46.5 426.9V432.2M47.5 427.1V431.1M48.5 427.9V430.9M49.5 422.5V428.8M50.5 425.0V428.6M51.5 424.6V428.6M52.5 423.6V430.2M53.5 425.8V431.0M55.5 425.4V433.8M58.5 441.0V443.7M59.5 445.2V447.6M61.5 453.3V456.7M63.5 463.7V467.1M64.5 482.3V488.2M65.5 489.8V493.9M66.5 482.2V485.7M70.5 511.6V515.6M71.5 535.0V538.0M74.5 560.6V563.4M76.5 578.6V583.2M78.5 595.4V600.6M80.5 610.8V613.4M83.5 634.1V639.9M85.5 635.0V638.0M86.5 642.4V646.1M94.5 684.1V688.4M96.5 701.2V707.9M99.5 705.2V711.6M100.5 705.3V709.0M101.5 703.9V707.4M102.5 704.9V709.8M103.5 693.7V699.6M104.5 703.2V706.9M105.5 699.9V707.2M106.5 698.2V701.3M107.5 695.4V701.4M108.5 691.1V693.3M110.5 684.3V686.9M111.5 679.3V681.5M113.5 653.1V658.5M114.5 662.0V666.2M116.5 636.9V639.1M118.5 620.7V624.1M126.5 568.7V571.0M127.5 560.4V565.8M128.5 537.3V540.4M129.5 544.1V549.9M131.5 513.0V516.6M133.5 498.1V501.7M134.5 503.8V508.2M136.5 472.9V478.9M137.5 483.2V488.6M142.5 443.9V446.5M147.5 429.4V432.8M148.5 423.6V431.0M149.5 423.0V428.8M151.5 422.6V430.1M152.5 426.5V429.8M154.5 426.0V431.8M155.5 424.9V433.8M156.5 426.7V434.6M157.5 433.1V437.3M161.5 447.8V453.4M163.5 461.4V464.8M166.5 479.7V483.2M168.5 508.3V510.7M169.5 517.2V520.3M176.5 574.6V577.8M179.5 583.1V588.8M181.5 602.5V604.8M182.5 623.6V627.9M184.5 626.0V628.3M186.5 639.6V642.6M188.5 666.4V668.6M192.5 685.6V689.7M195.5 697.5V703.2M196.5 698.9V705.7M197.5 700.9V707.1M198.5 703.0V709.6M199.5 703.8V712.6M200.5 705.3V709.8M201.5 699.6V701.7M202.5 704.5V711.5M203.5 703.5V708.6M204.5 703.2V711.0M205.5 701.3V710.1M206.5 699.7V704.0M209.5 678.2V681.8M210.5 674.4V676.6M212.5 676.6V679.4M214.5 652.5V655.2M216.5 652.6V656.0M217.5 629.8V633.7M220.5 608.5V610.6M222.5 606.2V612.0M223.5 583.8V586.9M225.5 580.6V584.5M226.5 556.5V560.2M229.5 547.2V550.6M231.5 515.7V519.9M233.5 514.1V518.1M236.5 476.2V481.6M238.5 478.6V481.2M240.5 467.0V472.2M243.5 451.6V454.3M245.5 444.0V449.2M246.5 432.1V435.6M248.5 424.6V431.6M249.5 422.8V430.5M250.5 423.9V429.3M251.5 425.3V429.3M252.5 424.1V429.0M255.5 429.9V432.9M257.5 433.2V436.3M260.5 454.9V459.0M262.5 465.3V471.1M267.5 497.7V501.3M268.5 505.0V509.9M270.5 521.8V526.2M273.5 529.7V534.2M278.5 588.5V593.4M280.5 605.7V611.1M281.5 595.1V601.0M282.5 621.7V626.8M284.5 620.6V625.9M285.5 644.2V647.3M286.5 649.6V652.2M287.5 641.6V646.7M294.5 680.7V686.0M296.5 698.3V701.5M297.5 701.1V707.2M298.5 702.0V708.9M299.5 702.9V706.6M301.5 704.9V708.7M302.5 704.2V707.8M305.5 702.2V710.9M306.5 689.6V693.7M307.5 696.8V701.0M310.5 686.8V689.0M311.5 683.2V688.5M313.5 661.9V664.0M318.5 627.3V630.3M320.5 626.3V629.3M324.5 593.4V596.2M325.5 571.6V573.7M326.5 561.6V563.7M331.5 519.1V521.9M334.5 494.6V499.7M335.5 489.3V492.3M336.5 495.1V501.0M337.5 474.0V477.6M340.5 459.0V461.0M341.5 450.6V454.6M343.5 440.5V446.3M345.5 445.8V450.9M346.5 430.0V435.4M347.5 425.4V433.7M348.5 424.1V432.5M349.5 434.9V438.7M350.5 425.8V429.1M351.5 433.3V437.0M352.5 420.8V429.2M353.5 422.8V430.0M354.5 425.3V429.7M355.5 427.0V432.0M356.5 428.2V434.1M358.5 436.1V438.9M369.5 495.2V498.9M378.5 568.4V573.1M380.5 586.5V590.1M382.5 617.4V622.3M384.5 632.7V637.8M391.5 677.8V679.8M392.5 671.0V674.9M394.5 691.8V697.1M396.5 696.7V702.5M397.5 699.3V703.7M398.5 701.7V710.1M403.5 704.1V710.0M404.5 703.8V709.7M405.5 692.1V697.5M407.5 699.4V706.3M415.5 648.2V653.6M418.5 643.1V647.5M420.5 613.6V616.8M426.5 579.0V581.2M467.5 474.8V476.8M468.5 455.6V461.1M469.5 451.1V456.0M471.5 454.2V458.7M472.5 450.2V456.1M474.5 428.0V435.4M475.5 430.8V434.2M476.5 424.9V431.9M477.5 424.1V431.0M478.5 421.6V429.3M479.5 433.5V435.7M480.5 422.3V428.9M481.5 434.4V438.1M483.5 426.6V431.1M487.5 450.2V452.5M490.5 463.7V466.7M491.5 469.3V474.6M494.5 488.0V490.7M496.5 486.2V492.2M498.5 503.7V507.7M500.5 517.9V523.0M502.5 535.8V538.6M510.5 602.9V606.0M513.5 642.0V644.5M514.5 648.5V652.8M515.5 643.0V645.5M516.5 647.4V652.1M517.5 651.8V657.5M519.5 678.2V683.9M520.5 669.4V674.7M521.5 686.9V689.1M523.5 694.7V697.8M525.5 701.0V709.8M526.5 693.7V697.6M527.5 703.0V711.9M528.5 705.1V709.9M529.5 694.3V700.3M530.5 704.4V707.4M531.5 704.5V710.1M532.5 703.2V705.9M533.5 701.9V705.4M534.5 700.6V704.9M540.5 680.0V682.7M543.5 662.6V667.5M545.5 650.0V655.5M548.5 627.1V630.1M554.5 563.0V566.6M555.5 570.6V574.9M559.5 520.7V524.1M561.5 520.5V524.6M568.5 457.6V462.3M571.5 441.5V446.1M574.5 433.9V437.1M575.5 428.1V434.4M577.5 424.8V431.1M578.5 425.0V429.5M579.5 423.3V429.8M580.5 426.0V430.2M581.5 422.2V429.9M583.5 424.8V432.2M585.5 429.0V436.0M594.5 487.6V491.1M597.5 508.6V512.9M598.5 517.5V522.9M600.5 516.3V520.6M605.5 559.4V562.9M608.5 601.3V605.4M610.5 616.7V622.3M612.5 631.6V635.6M618.5 672.3V676.3M622.5 690.0V694.1M623.5 694.8V696.8M625.5 699.4V707.8M626.5 701.5V706.8M628.5 704.5V707.7M629.5 705.3V713.7M631.5 705.4V710.7M632.5 703.4V711.7M633.5 703.3V707.3M634.5 691.4V695.7M635.5 698.6V702.0M636.5 696.7V701.2M637.5 692.5V694.6M644.5 643.2V648.0M646.5 628.3V633.8M647.5 620.7V625.8M648.5 614.2V617.8M649.5 606.0V610.7M651.5 591.1V594.0M654.5 579.5V581.7M656.5 545.6V551.0M657.5 554.1V559.7M658.5 531.4V534.1M659.5 537.6V540.9M662.5 513.3V518.7M664.5 497.7V500.1M667.5 478.5V480.9M672.5 451.6V456.4M674.5 434.5V436.8M675.5 430.8V434.6M676.5 427.6V432.0M678.5 423.8V430.2M681.5 424.2V428.9M682.5 425.5V430.2M683.5 428.0V431.6M684.5 429.1V433.1M688.5 452.1V457.8M690.5 461.2V463.3M691.5 466.8V471.3M693.5 479.7V482.4M695.5 493.3V495.5M698.5 499.7V504.1M700.5 515.1V518.9M707.5 576.0V578.4M710.5 615.6V620.3M712.5 631.0V634.3M721.5 686.0V690.0M722.5 689.8V693.5M725.5 699.9V703.9M726.5 690.0V695.1M727.5 702.8V709.4M730.5 705.3V712.8M733.5 702.2V706.4M734.5 693.8V696.6M735.5 699.5V702.6M736.5 697.2V703.6M740.5 681.0V685.0M741.5 675.4V680.7M742.5 656.4V661.8M743.5 651.4V654.7M744.5 645.5V648.1M748.5 614.0V618.7M749.5 623.0V627.3M750.5 616.0V620.2M752.5 598.5V603.7M753.5 590.7V595.7M755.5 558.0V561.4M757.5 542.4V545.0M759.5 525.5V527.7M762.5 514.4V518.7M765.5 479.6V481.7M766.5 472.6V476.2M770.5 461.4V464.1M775.5 429.8V435.7M776.5 429.5V432.6M777.5 436.3V440.7M778.5 426.4V430.3M781.5 432.9V437.8M784.5 426.1V433.0M785.5 428.9V434.0M786.5 431.9V437.9M788.5 450.5V455.5M793.5 464.5V469.1M796.5 484.7V487.7M799.5 521.6V527.1M807.5 571.3V577.2M814.5 643.8V645.9M815.5 636.9V640.9M819.5 674.9V680.8M820.5 668.3V671.4M822.5 688.9V693.7M825.5 698.5V707.3M826.5 700.8V704.7M828.5 704.1V708.6M830.5 703.9V708.4M831.5 705.5V713.0M836.5 697.5V705.9M838.5 690.2V695.9M842.5 672.6V676.1M843.5 653.1V656.1M850.5 616.5V619.3M852.5 583.7V589.0M853.5 592.7V596.4M854.5 567.7V571.5M859.5 541.5V543.8" stroke="#22b422" stroke-width="1.1"/>
<path d="M427.5 567L428 600V718M456.5 537V718" stroke="#1a9a1a" stroke-width="1"/><path d="M427 560L428 590" stroke="#22c622" stroke-width="2"/>
<path d="M429 718H455" stroke="#3aee3a" stroke-width="3.5"/>
<path d="M26.5 318.5H860M26.5 318V863M859.5 318V863M26 862.5H860" stroke="#aab4e6" stroke-width="1.4" fill="none"/>
</svg>
<svg style="left:0;top:0" width="900" height="400"><path d="M437 318H449L443 325Z" fill="#f0a020"/><path d="M406.5 324.5H417.5V334L412 338L406.5 334Z" fill="#f0a020"/><path d="M409 327.5H415M412 327.5V335" stroke="#000" stroke-width="1.6"/></svg>
<svg style="left:8px;top:706px" width="18" height="16"><path d="M1 1H12L17 8L12 15H1Z" fill="#1ec21e"/><text x="4" y="12" font-size="10" font-family="Liberation Sans" font-weight="bold" fill="#0a3a0a">4</text></svg>
<svg style="left:850px;top:682px" width="10" height="10"><path d="M9 1L2 5L9 9Z" fill="#1ec21e"/></svg>
<div class="a" style="left:26px;top:863px;width:461px;height:18px;background:#000;border:1.3px solid #b4bce8;border-radius:6px;border-top:none;border-radius:0 0 6px 6px"></div>
<div class="a" style="left:378px;top:865px;width:21px;height:14px;border-radius:7px;background:#18b018;color:#063806;font-size:12px;line-height:14px;text-align:center">4</div>
<div class="t" style="left:414px;top:866px;color:#1ea81e;font-size:12.5px;letter-spacing:1.2px">1.00 V</div>
<div class="t" style="left:474px;top:866px;color:#1ea81e;font-size:8px">B<sub style="font-size:7px">W</sub></div>
<div class="a" style="left:495px;top:863px;width:122px;height:32px;background:#000;border:1.3px solid #b4bce8;border-radius:6px"></div>
<div class="t" style="left:500px;top:866px;color:#f0f0f0;font-size:12.8px;letter-spacing:1.1px">80.0&micro;s</div>
<div class="a" style="left:498px;top:882px;width:10px;height:10px;background:#f0a020"></div><div class="t" style="left:500px;top:881px;color:#000;font-weight:bold;font-size:11px">T</div>
<svg style="left:508px;top:882px" width="20" height="10"><path d="M0 5H6M4 2.5L7 5L4 7.5" stroke="#f0a020" stroke-width="1.4" fill="none"/><path d="M9 2H18L13.5 8Z" fill="#f0a020"/></svg>
<div class="t" style="left:528px;top:880px;color:#f0a020;font-size:12.8px;letter-spacing:1.1px">29.9400&micro;s</div>
<div class="a" style="left:624px;top:864px;width:88px;height:31px;background:#000;border:1.3px solid #b4bce8;border-radius:6px"></div>
<div class="t" style="left:629px;top:866px;color:#f0f0f0;font-size:12.8px;letter-spacing:1.1px;line-height:14px">1.25GS/s<br>1M points</div>
<div class="a" style="left:719px;top:864px;width:141px;height:31px;background:#000;border:1.3px solid #b4bce8;border-radius:6px"></div>
<div class="a" style="left:744px;top:867px;width:21px;height:13px;border-radius:7px;background:#18b018;color:#063806;font-size:12px;line-height:13px;text-align:center">4</div>
<svg style="left:774px;top:866px" width="13" height="13"><path d="M1 12H4.5L8.5 1H12" stroke="#f0f0f0" stroke-width="1.8" fill="none"/></svg>
<div class="t" style="left:809px;top:866px;color:#f0f0f0;font-size:12.8px;letter-spacing:1.1px">500mV</div>
<div class="a" style="left:767px;top:912px;width:93px;height:31px;background:#000;border:1.3px solid #b4bce8;border-radius:6px"></div>
<div class="t" style="left:780px;top:914px;color:#f0f0f0;font-size:12.8px;letter-spacing:1.1px;line-height:14px">1 May 2021</div>
<div class="t" style="left:772px;top:928px;color:#f0f0f0;font-size:12.8px;letter-spacing:1.1px;line-height:14px">14:32:32</div>
<div class="a" style="left:875px;top:220px;width:21px;height:678px;background:#4b4e50"></div>
<div class="a" style="left:875px;top:898px;width:21px;height:65px;background:#2b2d2f"></div>
<div class="a" style="left:5px;top:972px;width:194px;height:43px;background:#1c2266"></div>
<div class="a" style="left:201px;top:972px;width:231px;height:43px;background:#1c2266"></div>
<div class="a" style="left:434px;top:972px;width:119px;height:43px;background:#1c2266"></div>
<div class="a" style="left:555px;top:972px;width:34px;height:43px;background:#1c2266"></div>
<div class="a" style="left:592px;top:972px;width:34px;height:43px;background:#1c2266"></div>
<div class="t" style="left:74px;top:974px;color:#f2f2f2;font-weight:bold;font-size:10px">subsystem</div>
<div class="t" style="left:272px;top:974px;color:#f2f2f2;font-weight:bold;font-size:10px">vertical</div>
<div class="t" style="left:385px;top:974px;color:#f2f2f2;font-weight:bold;font-size:10px">pos&nbsp; scale</div>
<div class="t" style="left:558px;top:973px;color:#f2f2f2;font-weight:bold;font-size:10px">zoom</div>
<div class="t" style="left:600px;top:973px;color:#f2f2f2;font-weight:bold;font-size:10px">pan</div>
<div class="a" style="left:443px;top:972px;width:14px;height:14px;border-radius:7px;background:#e8400c;color:#1a0a0a;font-weight:bold;font-size:13px;line-height:12px;text-align:center">a</div>
<div class="a" style="left:529px;top:972px;width:14px;height:14px;border-radius:7px;background:#e8400c;color:#1a0a0a;font-weight:bold;font-size:13px;line-height:12px;text-align:center">b</div>
<div class="a" style="left:5px;top:987px;width:46px;height:12px;background:#ebebeb;box-shadow:inset 1px 1px 0 #fff, 1px 1px 0 #5a5a70;color:#4672b0;font-weight:bold;font-size:9.5px;line-height:12px;text-align:center;letter-spacing:-0.2px">SEARCH</div>
<div class="a" style="left:54px;top:987px;width:30px;height:12px;background:#ebebeb;box-shadow:inset 1px 1px 0 #fff, 1px 1px 0 #5a5a70;color:#4672b0;font-weight:bold;font-size:9.5px;line-height:12px;text-align:center;letter-spacing:-0.2px">TRIG</div>
<div class="a" style="left:86px;top:987px;width:41px;height:12px;background:#ebebeb;box-shadow:inset 1px 1px 0 #fff, 1px 1px 0 #5a5a70;color:#4672b0;font-weight:bold;font-size:9.5px;line-height:12px;text-align:center;letter-spacing:-0.2px">MISC</div>
<div class="a" style="left:130px;top:987px;width:32px;height:12px;background:#ebebeb;box-shadow:inset 1px 1px 0 #fff, 1px 1px 0 #5a5a70;color:#4672b0;font-weight:bold;font-size:9.5px;line-height:12px;text-align:center;letter-spacing:-0.2px">VERT</div>
<div class="a" style="left:164px;top:987px;width:33px;height:12px;background:#ebebeb;box-shadow:inset 1px 1px 0 #fff, 1px 1px 0 #5a5a70;color:#4672b0;font-weight:bold;font-size:9.5px;line-height:12px;text-align:center;letter-spacing:-0.2px">FREQ</div>
<div class="a" style="left:5px;top:1001px;width:46px;height:12px;background:#ebebeb;box-shadow:inset 1px 1px 0 #fff, 1px 1px 0 #5a5a70;color:#4672b0;font-weight:bold;font-size:9.5px;line-height:12px;text-align:center;letter-spacing:-0.2px">HORIZ</div>
<div class="a" style="left:54px;top:1001px;width:30px;height:12px;background:#ebebeb;box-shadow:inset 1px 1px 0 #fff, 1px 1px 0 #5a5a70;color:#4672b0;font-weight:bold;font-size:9.5px;line-height:12px;text-align:center;letter-spacing:-0.2px">ACQ</div>
<div class="a" style="left:86px;top:1001px;width:41px;height:12px;background:#ebebeb;box-shadow:inset 1px 1px 0 #fff, 1px 1px 0 #5a5a70;color:#4672b0;font-weight:bold;font-size:9.5px;line-height:12px;text-align:center;letter-spacing:-0.2px">CURSOR</div>
<div class="a" style="left:130px;top:1001px;width:32px;height:12px;background:#ebebeb;box-shadow:inset 1px 1px 0 #fff, 1px 1px 0 #5a5a70;color:#4672b0;font-weight:bold;font-size:9.5px;line-height:12px;text-align:center;letter-spacing:-0.2px">MEAS</div>
<div class="a" style="left:202px;top:987px;width:27px;height:12px;background:#ebebeb;box-shadow:inset 1px 1px 0 #fff, 1px 1px 0 #5a5a70;color:#4672b0;font-weight:bold;font-size:9.5px;line-height:12px;text-align:center;letter-spacing:-0.2px">CH1</div>
<div class="a" style="left:231px;top:987px;width:26px;height:12px;background:#ebebeb;box-shadow:inset 1px 1px 0 #fff, 1px 1px 0 #5a5a70;color:#4672b0;font-weight:bold;font-size:9.5px;line-height:12px;text-align:center;letter-spacing:-0.2px">CH2</div>
<div class="a" style="left:259px;top:987px;width:27px;height:12px;background:#ebebeb;box-shadow:inset 1px 1px 0 #fff, 1px 1px 0 #5a5a70;color:#4672b0;font-weight:bold;font-size:9.5px;line-height:12px;text-align:center;letter-spacing:-0.2px">CH3</div>
<div class="a" style="left:287px;top:987px;width:27px;height:12px;background:#ebebeb;box-shadow:inset 1px 1px 0 #fff, 1px 1px 0 #5a5a70;color:#4672b0;font-weight:bold;font-size:9.5px;line-height:12px;text-align:center;letter-spacing:-0.2px">CH4</div>
<div class="a" style="left:316px;top:987px;width:48px;height:12px;background:#ebebeb;box-shadow:inset 1px 1px 0 #fff, 1px 1px 0 #5a5a70;color:#4672b0;font-weight:bold;font-size:9.5px;line-height:12px;text-align:center;letter-spacing:-0.2px">D15 - D0</div>
<div class="a" style="left:202px;top:1001px;width:27px;height:12px;background:#ebebeb;box-shadow:inset 1px 1px 0 #fff, 1px 1px 0 #5a5a70;color:#4672b0;font-weight:bold;font-size:9.5px;line-height:12px;text-align:center;letter-spacing:-0.2px">B1</div>
<div class="a" style="left:231px;top:1001px;width:26px;height:12px;background:#ebebeb;box-shadow:inset 1px 1px 0 #fff, 1px 1px 0 #5a5a70;color:#4672b0;font-weight:bold;font-size:9.5px;line-height:12px;text-align:center;letter-spacing:-0.2px">B2</div>
<div class="a" style="left:259px;top:1001px;width:27px;height:12px;background:#ebebeb;box-shadow:inset 1px 1px 0 #fff, 1px 1px 0 #5a5a70;color:#4672b0;font-weight:bold;font-size:9.5px;line-height:12px;text-align:center;letter-spacing:-0.2px">B3</div>
<div class="a" style="left:287px;top:1001px;width:27px;height:12px;background:#ebebeb;box-shadow:inset 1px 1px 0 #fff, 1px 1px 0 #5a5a70;color:#4672b0;font-weight:bold;font-size:9.5px;line-height:12px;text-align:center;letter-spacing:-0.2px">B4</div>
<div class="a" style="left:316px;top:1001px;width:33px;height:12px;background:#ebebeb;box-shadow:inset 1px 1px 0 #fff, 1px 1px 0 #5a5a70;color:#4672b0;font-weight:bold;font-size:9.5px;line-height:12px;text-align:center;letter-spacing:-0.2px">MATH</div>
<div class="a" style="left:351px;top:1001px;width:25px;height:12px;background:#ebebeb;box-shadow:inset 1px 1px 0 #fff, 1px 1px 0 #5a5a70;color:#4672b0;font-weight:bold;font-size:9.5px;line-height:12px;text-align:center;letter-spacing:-0.2px">REF</div>
<div class="a" style="left:468px;top:987px;width:51px;height:12px;background:#ebebeb;box-shadow:inset 1px 1px 0 #fff, 1px 1px 0 #5a5a70;color:#4672b0;font-weight:bold;font-size:9.5px;line-height:12px;text-align:center;letter-spacing:-0.2px">SELECT</div>
<div class="a" style="left:468px;top:1001px;width:51px;height:12px;background:#ebebeb;box-shadow:inset 1px 1px 0 #fff, 1px 1px 0 #5a5a70;color:#4672b0;font-weight:bold;font-size:9.5px;line-height:12px;text-align:center;letter-spacing:-0.2px">MENU OFF</div>
<div class="a" style="left:378px;top:987px;width:32px;height:27px;background:#fbfbfb"></div><svg style="left:378px;top:987px" width="32" height="27"><path d="M0 13.5H32" stroke="#c8c8d0" stroke-width="1"/><path d="M3 11L9 2L15 11Z M18 11L21 6L24 11Z M27 11L28.5 8.5L30 11Z" fill="#3a6cb0"/><path d="M3 15L9 25L15 15Z M18 15L21 20L24 15Z M27 15L28.5 17.5L30 15Z" fill="#3a6cb0"/></svg>
<div class="a" style="left:434px;top:987px;width:32px;height:27px;background:#fbfbfb"></div><svg style="left:434px;top:987px" width="32" height="27"><path d="M0 13.5H32" stroke="#c8c8d0" stroke-width="1"/><path d="M3 11L9 2L15 11Z M18 11L21 6L24 11Z M27 11L28.5 8.5L30 11Z" fill="#3a6cb0"/><path d="M3 15L9 25L15 15Z M18 15L21 20L24 15Z M27 15L28.5 17.5L30 15Z" fill="#3a6cb0"/></svg>
<div class="a" style="left:520px;top:987px;width:32px;height:27px;background:#fbfbfb"></div><svg style="left:520px;top:987px" width="32" height="27"><path d="M0 13.5H32" stroke="#c8c8d0" stroke-width="1"/><path d="M3 11L9 2L15 11Z M18 11L21 6L24 11Z M27 11L28.5 8.5L30 11Z" fill="#3a6cb0"/><path d="M3 15L9 25L15 15Z M18 15L21 20L24 15Z M27 15L28.5 17.5L30 15Z" fill="#3a6cb0"/></svg>
<div class="a" style="left:556px;top:987px;width:32px;height:27px;background:#fbfbfb"></div><svg style="left:556px;top:987px" width="32" height="27"><path d="M0 13.5H32" stroke="#c8c8d0" stroke-width="1"/><path d="M3 11L9 2L15 11Z M18 11L21 6L24 11Z M27 11L28.5 8.5L30 11Z" fill="#3a6cb0"/><path d="M3 15L9 25L15 15Z M18 15L21 20L24 15Z M27 15L28.5 17.5L30 15Z" fill="#3a6cb0"/></svg>
<div class="a" style="left:593px;top:987px;width:32px;height:27px;background:#fbfbfb"></div><svg style="left:593px;top:987px" width="32" height="27"><path d="M0 13.5H32" stroke="#c8c8d0" stroke-width="1"/><path d="M3 11L9 2L15 11Z M18 11L21 6L24 11Z M27 11L28.5 8.5L30 11Z" fill="#3a6cb0"/><path d="M3 15L9 25L15 15Z M18 15L21 20L24 15Z M27 15L28.5 17.5L30 15Z" fill="#3a6cb0"/></svg>
<div class="a" style="left:412px;top:987px;width:18px;height:27px;background:#fbfbfb"></div>
<svg style="left:412px;top:987px" width="18" height="27"><path d="M0 13.5H18" stroke="#c8c8d0"/><path d="M3 11L9 2L15 11Z M3 15L9 25L15 15Z" fill="#3a6cb0"/></svg>
<div class="a" style="left:631px;top:974px;width:12px;height:11px;background:#ebebeb;box-shadow:inset 1px 1px 0 #fff, 1px 1px 0 #5a5a70;color:#4672b0;font-weight:bold;font-size:9px;line-height:11px;text-align:center;letter-spacing:-0.2px">1</div>
<div class="a" style="left:645px;top:974px;width:12px;height:11px;background:#ebebeb;box-shadow:inset 1px 1px 0 #fff, 1px 1px 0 #5a5a70;color:#4672b0;font-weight:bold;font-size:9px;line-height:11px;text-align:center;letter-spacing:-0.2px">2</div>
<div class="a" style="left:659px;top:974px;width:12px;height:11px;background:#ebebeb;box-shadow:inset 1px 1px 0 #fff, 1px 1px 0 #5a5a70;color:#4672b0;font-weight:bold;font-size:9px;line-height:11px;text-align:center;letter-spacing:-0.2px">3</div>
<div class="a" style="left:673px;top:974px;width:12px;height:11px;background:#ebebeb;box-shadow:inset 1px 1px 0 #fff, 1px 1px 0 #5a5a70;color:#4672b0;font-weight:bold;font-size:9px;line-height:11px;text-align:center;letter-spacing:-0.2px">.</div>
<div class="a" style="left:631px;top:987px;width:12px;height:11px;background:#ebebeb;box-shadow:inset 1px 1px 0 #fff, 1px 1px 0 #5a5a70;color:#4672b0;font-weight:bold;font-size:9px;line-height:11px;text-align:center;letter-spacing:-0.2px">4</div>
<div class="a" style="left:645px;top:987px;width:12px;height:11px;background:#ebebeb;box-shadow:inset 1px 1px 0 #fff, 1px 1px 0 #5a5a70;color:#4672b0;font-weight:bold;font-size:9px;line-height:11px;text-align:center;letter-spacing:-0.2px">5</div>
<div class="a" style="left:659px;top:987px;width:12px;height:11px;background:#ebebeb;box-shadow:inset 1px 1px 0 #fff, 1px 1px 0 #5a5a70;color:#4672b0;font-weight:bold;font-size:9px;line-height:11px;text-align:center;letter-spacing:-0.2px">6</div>
<div class="a" style="left:673px;top:987px;width:12px;height:11px;background:#ebebeb;box-shadow:inset 1px 1px 0 #fff, 1px 1px 0 #5a5a70;color:#4672b0;font-weight:bold;font-size:9px;line-height:11px;text-align:center;letter-spacing:-0.2px">0</div>
<div class="a" style="left:631px;top:1001px;width:12px;height:11px;background:#ebebeb;box-shadow:inset 1px 1px 0 #fff, 1px 1px 0 #5a5a70;color:#4672b0;font-weight:bold;font-size:9px;line-height:11px;text-align:center;letter-spacing:-0.2px">7</div>
<div class="a" style="left:645px;top:1001px;width:12px;height:11px;background:#ebebeb;box-shadow:inset 1px 1px 0 #fff, 1px 1px 0 #5a5a70;color:#4672b0;font-weight:bold;font-size:9px;line-height:11px;text-align:center;letter-spacing:-0.2px">8</div>
<div class="a" style="left:659px;top:1001px;width:12px;height:11px;background:#ebebeb;box-shadow:inset 1px 1px 0 #fff, 1px 1px 0 #5a5a70;color:#4672b0;font-weight:bold;font-size:9px;line-height:11px;text-align:center;letter-spacing:-0.2px">9</div>
<div class="a" style="left:673px;top:1001px;width:12px;height:11px;background:#ebebeb;box-shadow:inset 1px 1px 0 #fff, 1px 1px 0 #5a5a70;color:#4672b0;font-weight:bold;font-size:9px;line-height:11px;text-align:center;letter-spacing:-0.2px">-</div>
<div class="a" style="left:687px;top:974px;width:29px;height:18px;background:#ebebeb;box-shadow:inset 1px 1px 0 #fff,1px 1px 0 #5a5a70;color:#4672b0;font-weight:bold;font-size:9px;line-height:9px;text-align:center;padding-top:1px">Bksp<br>&larr;</div>
<div class="a" style="left:687px;top:995px;width:29px;height:18px;background:#ebebeb;box-shadow:inset 1px 1px 0 #fff,1px 1px 0 #5a5a70;color:#4672b0;font-weight:bold;font-size:9px;line-height:9px;text-align:center;padding-top:1px">Enter<br>&#8629;</div>
</div>
</div>
</div>
<div class="a" style="left:916.0px;top:219.0px;width:933.0px;height:801.0px;background:#f0f0f0"></div>
<div class="a" style="left:916.0px;top:219.0px;width:933.0px;height:41.0px;background:#fff"></div>
<svg style="left:929px;top:229px" width="20" height="20" viewBox="0 0 20 20"><rect x="0" y="0" width="20" height="20" rx="1.5" fill="#505356"/><path d="M4 3.5L17 10L4 16.5Z" fill="#f3d21a"/><circle cx="8" cy="10" r="1.2" fill="#8a6a10"/></svg>
<div class="lvlab" style="left:955.0px;top:232.8px;font-size:14.4px;color:#9b9b9b;">Benchmark Project_junk1.vi Front Panel on Benchmark Project_junk1.lvproj/RT Target</div>
<div class="a" style="left:916.0px;top:284.0px;width:933.0px;height:1.0px;background:#d0d0d0"></div>
<div class="lvlab" style="left:925.0px;top:263.7px;font-size:14.5px;color:#1a1a1a;">File</div>
<div class="lvlab" style="left:965.0px;top:263.7px;font-size:14.5px;color:#1a1a1a;">Edit</div>
<div class="lvlab" style="left:1007.0px;top:263.7px;font-size:14.5px;color:#1a1a1a;">View</div>
<div class="lvlab" style="left:1056.5px;top:263.7px;font-size:14.5px;color:#1a1a1a;">Project</div>
<div class="lvlab" style="left:1120.4px;top:263.7px;font-size:14.5px;color:#1a1a1a;">Operate</div>
<svg style="left:985px;top:294px" width="16" height="16" viewBox="0 0 16 16"><path d="M1 5.5H8V1.5L15 8L8 14.5V10.5H1Z" fill="#fff" stroke="#111" stroke-width="1.4" stroke-linejoin="round"/></svg>
<svg style="left:1010px;top:292px" width="20" height="18" viewBox="0 0 20 18"><path d="M4 10V5.5H12V2.5L17 7L12 11.5V8.5H7V10Z" fill="#fff" stroke="#111" stroke-width="1.3" stroke-linejoin="round"/><path d="M16 8V12.5H8V15.5L3 11L8 6.5V9.5H13V8Z" fill="#fff" stroke="#111" stroke-width="1.3" stroke-linejoin="round"/></svg>
<svg style="left:0;top:0" width="1" height="1"><circle cx="1051.6" cy="301.4" r="9.5" fill="#e8b4b8" stroke="#c4c4c4" stroke-width="1.5"/><circle cx="1051.6" cy="301.4" r="7.0" fill="#eaa6ab"/></svg>
<div class="a" style="left:1099.0px;top:289.5px;width:201.0px;height:24.5px;background:#f4f4f4;border:1px solid #a0a0a0"></div>
<div class="lvlab" style="left:1107.0px;top:295.7px;font-size:14.5px;color:#111;">15pt Application Font</div>
<div class="a" style="left:916.0px;top:316.0px;width:933.0px;height:1.0px;background:#a8a8a8"></div>
<div class="grid" style="left:917px;top:317px;width:913px;height:703px;background-position:0px 4px"></div>
<div class="a" style="left:916.0px;top:219.0px;width:1.0px;height:801.0px;background:#6a6a6a"></div>
<svg style="left:917px;top:317px" width="10" height="10"><path d="M0 0H8L0 8Z" fill="#b8b8b8"/></svg>
<div class="lvlab" style="left:933.0px;top:345.5px;font-size:14.2px;color:#111;"><b>Overview</b>: Gathers timing information on a loop running on the RT target.</div>
<div class="lvlab" style="left:933.0px;top:364.2px;font-size:14.2px;color:#111;"><b>Requirements</b>: LabVIEW Real-Time Module</div>
<div class="lvlab" style="left:933.0px;top:383.0px;font-size:14.2px;color:#111;"><b>Instructions</b>:</div>
<div class="lvlab" style="left:933.0px;top:401.7px;font-size:14.2px;color:#111;">1. In Measurement &amp; Automation Explorer, configure the target.</div>
<div class="lvlab" style="left:933.0px;top:420.5px;font-size:14.2px;color:#111;">2. From the <b>Project Explorer</b> window, add the target.</div>
<div class="lvlab" style="left:933.0px;top:439.2px;font-size:14.2px;color:#111;">3. From the front panel, select the number of iterations.</div>
<div class="lvlab" style="left:933.0px;top:458.0px;font-size:14.2px;color:#111;">4. Enable <b>Calibrate?</b> if you want to exclude overhead.</div>
<div class="lvlab" style="left:933.0px;top:476.7px;font-size:14.2px;color:#111;">5. Open the block diagram and insert your code.</div>
<div class="lvlab" style="left:933.0px;top:495.5px;font-size:14.2px;color:#111;">6. Run the VI.</div>
<div class="lvlab" style="left:928.0px;top:632.2px;font-size:14.5px;color:#1a1a1a;transform:scaleX(1.003);transform-origin:0 0;">Iterations</div>
<div class="a" style="left:930.0px;top:656.0px;width:97.0px;height:37.0px;border-radius:6px;background:rgba(0,0,0,0.12)"></div>
<div class="a" style="left:928.0px;top:654.0px;width:97.0px;height:37.0px;border-radius:6px;background:linear-gradient(#f6f6f6,#e2e2e2);border:1px solid #a8a8a8;box-shadow:inset 0 1px 0 #fff"></div>
<div class="a" style="left:957.0px;top:660.0px;width:62.0px;height:25.0px;background:#fcfcfc;border:1px solid #8c8c8c;box-shadow:inset 1px 1px 0 #9a9a9a, inset 0 -1px 0 #e8e8e8"></div>
<div class="lvlab" style="left:963.0px;top:665.4px;font-size:14.5px;color:#1a1a1a;">1000</div>
<div class="a" style="left:936.0px;top:660.0px;width:16.0px;height:25.0px;border:1px solid #b8b8b8;border-radius:3px;background:linear-gradient(#fbfbfb,#e6e6e6)"></div>
<div class="a" style="left:937.0px;top:672.5px;width:14.0px;height:1.0px;background:#c4c4c4"></div>
<svg style="left:0;top:0" width="1" height="1"><path d="M940.0 669.5L944.0 665.5L948.0 669.5Z M940.0 676.0L944.0 680.0L948.0 676.0Z" fill="#505050"/></svg>
<div class="lvlab" style="left:928.0px;top:700.7px;font-size:14.5px;color:#1a1a1a;transform:scaleX(1.038);transform-origin:0 0;">Warmup iterations</div>
<div class="a" style="left:930.0px;top:725.0px;width:97.0px;height:37.0px;border-radius:6px;background:rgba(0,0,0,0.12)"></div>
<div class="a" style="left:928.0px;top:723.0px;width:97.0px;height:37.0px;border-radius:6px;background:linear-gradient(#f6f6f6,#e2e2e2);border:1px solid #a8a8a8;box-shadow:inset 0 1px 0 #fff"></div>
<div class="a" style="left:957.0px;top:729.5px;width:62.0px;height:24.5px;background:#fcfcfc;border:1px solid #8c8c8c;box-shadow:inset 1px 1px 0 #9a9a9a, inset 0 -1px 0 #e8e8e8"></div>
<div class="lvlab" style="left:963.0px;top:734.7px;font-size:14.5px;color:#1a1a1a;">1</div>
<div class="a" style="left:936.0px;top:729.5px;width:16.0px;height:24.5px;border:1px solid #b8b8b8;border-radius:3px;background:linear-gradient(#fbfbfb,#e6e6e6)"></div>
<div class="a" style="left:937.0px;top:741.8px;width:14.0px;height:1.0px;background:#c4c4c4"></div>
<svg style="left:0;top:0" width="1" height="1"><path d="M940.0 738.8L944.0 734.8L948.0 738.8Z M940.0 745.2L944.0 749.2L948.0 745.2Z" fill="#505050"/></svg>
<div class="lvlab" style="left:1051.3px;top:737.1px;font-size:14.5px;color:#1a1a1a;transform:scaleX(1.025);transform-origin:0 0;">seconds to wait</div>
<div class="a" style="left:1052.0px;top:757.0px;width:74.0px;height:27.0px;background:#ececec;box-shadow:0 0 0 1px #f4f4f4"></div>
<svg style="left:0;top:0" width="1" height="1"><ellipse cx="1044.2" cy="770.0" rx="7.2" ry="15.5" fill="#b4b4b4" stroke="#8e8e8e" stroke-width="1"/><ellipse cx="1043.2" cy="770.0" rx="4.3" ry="13.2" fill="#cacaca"/><path d="M1041.2 767.0L1044.2 758.5L1046.2 767.0M1041.2 773.0L1044.2 781.5L1046.2 773.0M1039.0 770.0H1049.5" stroke="#8a8a8a" stroke-width="1" fill="none"/></svg>
<div class="a" style="left:1054.0px;top:760.0px;width:68.0px;height:21.0px;background:#fcfcfc"></div>
<div class="lvlab" style="left:1057.5px;top:763.7px;font-size:14.5px;color:#1a1a1a;transform:scaleX(0.943);transform-origin:0 0;">505u</div>
<div class="lvlab" style="left:928.0px;top:769.7px;font-size:14.5px;color:#1a1a1a;transform:scaleX(0.979);transform-origin:0 0;">Calibrate?</div>
<svg style="left:0;top:0" width="1" height="1"><ellipse cx="960" cy="810" rx="31.5" ry="12.8" fill="#d4d4d4" stroke="#8a8a8a" stroke-width="1"/><path d="M964 798.5Q982 798 990 806Q992 810 990 814Q982 822 964 821.5Z" fill="#c8961c" stroke="#8a6a10" stroke-width="0.8"/><path d="M968 802Q980 802 985 808Q980 816 968 817Z" fill="#d8a832"/></svg>
<div class="lvlab" style="left:934.0px;top:820.1px;font-size:14.5px;color:#1a1a1a;transform:scaleX(1.007);transform-origin:0 0;">Standard deviation (us)</div>
<div class="a" style="left:937.0px;top:843.0px;width:168.0px;height:37.5px;border-radius:6px;background:rgba(0,0,0,0.12)"></div>
<div class="a" style="left:935.0px;top:841.0px;width:168.0px;height:37.5px;border-radius:6px;background:linear-gradient(#f6f6f6,#e2e2e2);border:1px solid #a8a8a8;box-shadow:inset 0 1px 0 #fff"></div>
<div class="a" style="left:941.0px;top:847.5px;width:156.5px;height:25.0px;background:#d6d6d6;border:1px solid #8c8c8c;box-shadow:inset 1px 1px 0 #9a9a9a, inset 0 -1px 0 #e8e8e8"></div>
<div class="lvlab" style="left:946.5px;top:852.9px;font-size:14.5px;color:#1a1a1a;">0.218</div>
<div class="lvlab" style="left:934.0px;top:889.3px;font-size:14.5px;color:#1a1a1a;transform:scaleX(1.023);transform-origin:0 0;">Max jitter (us)</div>
<div class="a" style="left:937.0px;top:912.5px;width:168.0px;height:37.0px;border-radius:6px;background:rgba(0,0,0,0.12)"></div>
<div class="a" style="left:935.0px;top:910.5px;width:168.0px;height:37.0px;border-radius:6px;background:linear-gradient(#f6f6f6,#e2e2e2);border:1px solid #a8a8a8;box-shadow:inset 0 1px 0 #fff"></div>
<div class="a" style="left:941.0px;top:916.5px;width:156.5px;height:24.5px;background:#d6d6d6;border:1px solid #8c8c8c;box-shadow:inset 1px 1px 0 #9a9a9a, inset 0 -1px 0 #e8e8e8"></div>
<div class="lvlab" style="left:946.5px;top:921.7px;font-size:14.5px;color:#1a1a1a;">1.921</div>
<div class="lvlab" style="left:934.0px;top:958.1px;font-size:14.5px;color:#1a1a1a;transform:scaleX(1.022);transform-origin:0 0;">Mean time (us)</div>
<div class="a" style="left:937.0px;top:981.5px;width:168.0px;height:36.5px;border-radius:6px;background:rgba(0,0,0,0.12)"></div>
<div class="a" style="left:935.0px;top:979.5px;width:168.0px;height:36.5px;border-radius:6px;background:linear-gradient(#f6f6f6,#e2e2e2);border:1px solid #a8a8a8;box-shadow:inset 0 1px 0 #fff"></div>
<div class="a" style="left:941.0px;top:985.0px;width:156.5px;height:25.0px;background:#d6d6d6;border:1px solid #8c8c8c;box-shadow:inset 1px 1px 0 #9a9a9a, inset 0 -1px 0 #e8e8e8"></div>
<div class="lvlab" style="left:946.5px;top:990.4px;font-size:14.5px;color:#1a1a1a;">507.155</div>
<div class="lvlab" style="left:1159.4px;top:633.4px;font-size:14.5px;color:#1a1a1a;transform:scaleX(1.003);transform-origin:0 0;">Execution times (us)</div>
<div class="a" style="left:1160.0px;top:655.0px;width:637.0px;height:170.0px;border:1px solid #8a8a8a;border-radius:5px;background:#dcdcdc;box-shadow:inset 1px 1px 0 #f8f8f8, 1px 1px 1px rgba(0,0,0,0.15)"></div>
<div class="a" style="left:1215.5px;top:669.2px;width:555.0px;height:116.8px;background:#fff"></div>
<svg style="left:0;top:0" width="1" height="1">
<path d="M1215.5 669.2V786M1226.6 669.2V786M1237.7 669.2V786M1248.8 669.2V786M1259.9 669.2V786M1271.0 669.2V786M1282.1 669.2V786M1293.2 669.2V786M1304.3 669.2V786M1315.4 669.2V786M1326.5 669.2V786M1337.6 669.2V786M1348.7 669.2V786M1359.8 669.2V786M1370.9 669.2V786M1382.0 669.2V786M1393.1 669.2V786M1404.2 669.2V786M1415.3 669.2V786M1426.4 669.2V786M1437.5 669.2V786M1448.6 669.2V786M1459.7 669.2V786M1470.8 669.2V786M1481.9 669.2V786M1493.0 669.2V786M1504.1 669.2V786M1515.2 669.2V786M1526.3 669.2V786M1537.4 669.2V786M1548.5 669.2V786M1559.6 669.2V786M1570.7 669.2V786M1581.8 669.2V786M1592.9 669.2V786M1604.0 669.2V786M1615.1 669.2V786M1626.2 669.2V786M1637.3 669.2V786M1648.4 669.2V786M1659.5 669.2V786M1670.6 669.2V786M1681.7 669.2V786M1692.8 669.2V786M1703.9 669.2V786M1715.0 669.2V786M1726.1 669.2V786M1737.2 669.2V786M1748.3 669.2V786M1759.4 669.2V786M1770.5 669.2V786M1215.5 786.0H1770.5M1215.5 782.1H1770.5M1215.5 778.2H1770.5M1215.5 774.3H1770.5M1215.5 770.4H1770.5M1215.5 766.5H1770.5M1215.5 762.6H1770.5M1215.5 758.7H1770.5M1215.5 754.9H1770.5M1215.5 751.0H1770.5M1215.5 747.1H1770.5M1215.5 743.2H1770.5M1215.5 739.3H1770.5M1215.5 735.4H1770.5M1215.5 731.5H1770.5M1215.5 727.6H1770.5M1215.5 723.7H1770.5M1215.5 719.8H1770.5M1215.5 715.9H1770.5M1215.5 712.0H1770.5M1215.5 708.1H1770.5M1215.5 704.2H1770.5M1215.5 700.3H1770.5M1215.5 696.5H1770.5M1215.5 692.6H1770.5M1215.5 688.7H1770.5M1215.5 684.8H1770.5M1215.5 680.9H1770.5M1215.5 677.0H1770.5M1215.5 673.1H1770.5M1215.5 669.2H1770.5" stroke="#ececec" stroke-width="1"/>
<path d="M1215.5 669.2V786M1271.0 669.2V786M1326.5 669.2V786M1382.0 669.2V786M1437.5 669.2V786M1493.0 669.2V786M1548.5 669.2V786M1604.0 669.2V786M1659.5 669.2V786M1715.0 669.2V786M1770.5 669.2V786M1215.5 786.0H1770.5M1215.5 766.5H1770.5M1215.5 747.1H1770.5M1215.5 727.6H1770.5M1215.5 708.1H1770.5M1215.5 688.7H1770.5" stroke="#d2d2d2" stroke-width="1"/>
<path d="M1215.5 758.4L1216.1 747.7L1216.6 758.8L1217.2 753.4L1217.7 759.8L1218.3 744.4L1218.8 755.6L1219.4 739.7L1219.9 762.5L1220.5 749.8L1221.0 746.3L1221.6 741.0L1222.2 756.3L1222.7 753.0L1223.3 755.1L1223.8 751.2L1224.4 758.3L1224.9 748.3L1225.5 758.9L1226.0 749.9L1226.6 758.7L1227.2 749.7L1227.7 758.4L1228.3 752.7L1228.8 762.6L1229.4 747.1L1229.9 761.4L1230.5 749.3L1231.0 757.3L1231.6 753.1L1232.2 757.1L1232.7 754.3L1233.3 760.8L1233.8 751.7L1234.4 761.4L1234.9 751.8L1235.5 762.3L1236.0 748.3L1236.6 754.9L1237.1 753.2L1237.7 761.9L1238.3 751.2L1238.8 762.5L1239.4 751.8L1239.9 755.4L1240.5 750.0L1241.0 760.9L1241.6 752.8L1242.1 755.5L1242.7 752.3L1243.2 762.4L1243.8 749.0L1244.4 755.8L1244.9 752.9L1245.5 755.6L1246.0 754.4L1246.6 761.1L1247.1 753.5L1247.7 759.2L1248.2 751.4L1248.8 756.3L1249.4 749.2L1249.9 755.9L1250.5 749.8L1251.0 755.8L1251.6 751.6L1252.1 756.5L1252.7 752.8L1253.2 762.4L1253.8 748.6L1254.3 757.2L1254.9 748.0L1255.5 756.5L1256.0 751.8L1256.6 761.5L1257.1 749.9L1257.7 755.6L1258.2 747.1L1258.8 756.5L1259.3 752.8L1259.9 760.9L1260.5 752.3L1261.0 757.2L1261.6 754.3L1262.1 755.6L1262.7 750.3L1263.2 756.7L1263.8 750.2L1264.3 757.7L1264.9 751.3L1265.5 762.3L1266.0 751.1L1266.6 759.3L1267.1 748.1L1267.7 756.3L1268.2 753.7L1268.8 761.9L1269.3 748.5L1269.9 756.8L1270.4 753.4L1271.0 753.7L1271.6 748.6L1272.1 767.4L1272.7 748.3L1273.2 750.0L1273.8 757.1L1274.3 761.7L1274.9 769.7L1275.4 771.4L1276.0 748.0L1276.5 766.3L1277.1 754.5L1277.7 765.9L1278.2 727.6L1278.8 757.3L1279.3 764.9L1279.9 767.9L1280.4 754.1L1281.0 770.6L1281.5 766.6L1282.1 758.2L1282.7 750.8L1283.2 756.8L1283.8 765.3L1284.3 749.2L1284.9 759.0L1285.4 761.0L1286.0 754.8L1286.5 768.5L1287.1 760.5L1287.7 769.3L1288.2 753.4L1288.8 759.7L1289.3 749.1L1289.9 769.0L1290.4 748.6L1291.0 767.6L1291.5 754.9L1292.1 750.7L1292.6 752.2L1293.2 762.3L1293.8 753.4L1294.3 760.7L1294.9 751.3L1295.4 755.4L1296.0 755.8L1296.5 768.8L1297.1 757.4L1297.6 768.5L1298.2 757.3L1298.8 766.9L1299.3 757.6L1299.9 757.3L1300.4 754.9L1301.0 771.2L1301.5 753.1L1302.1 764.3L1302.6 756.2L1303.2 765.3L1303.7 757.9L1304.3 761.1L1304.9 755.7L1305.4 760.6L1306.0 751.9L1306.5 759.4L1307.1 757.2L1307.6 764.9L1308.2 758.9L1308.7 768.0L1309.3 750.8L1309.8 770.0L1310.4 756.8L1311.0 769.5L1311.5 751.2L1312.1 772.4L1312.6 756.6L1313.2 768.5L1313.7 749.9L1314.3 767.7L1314.8 751.7L1315.4 766.1L1316.0 750.9L1316.5 767.5L1317.1 757.5L1317.6 757.0L1318.2 757.0L1318.7 767.0L1319.3 753.8L1319.8 767.2L1320.4 755.8L1321.0 768.3L1321.5 756.7L1322.1 753.1L1322.6 756.1L1323.2 766.9L1323.7 757.9L1324.3 754.0L1324.8 754.8L1325.4 752.2L1325.9 750.1L1326.5 750.4L1327.1 756.7L1327.6 747.5L1328.2 755.8L1328.7 751.0L1329.3 758.2L1329.8 756.4L1330.4 750.8L1330.9 763.5L1331.5 752.2L1332.0 758.4L1332.6 747.4L1333.2 749.7L1333.7 756.0L1334.3 767.1L1334.8 751.8L1335.4 764.4L1335.9 755.8L1336.5 764.9L1337.0 754.7L1337.6 768.2L1338.2 750.5L1338.7 766.7L1339.3 750.3L1339.8 760.5L1340.4 759.6L1340.9 759.8L1341.5 755.1L1342.0 761.1L1342.6 751.0L1343.2 752.0L1343.7 756.8L1344.3 761.1L1344.8 753.5L1345.4 768.7L1345.9 758.0L1346.5 751.0L1347.0 757.4L1347.6 749.9L1348.1 753.6L1348.7 765.7L1349.3 758.0L1349.8 756.6L1350.4 749.1L1350.9 770.4L1351.5 754.9L1352.0 752.1L1352.6 752.5L1353.1 759.8L1353.7 758.8L1354.2 754.0L1354.8 756.2L1355.4 762.6L1355.9 752.7L1356.5 686.7L1357.0 755.7L1357.6 764.6L1358.1 754.7L1358.7 761.2L1359.2 754.4L1359.8 761.5L1360.4 753.1L1360.9 761.9L1361.5 752.3L1362.0 764.4L1362.6 755.8L1363.1 763.8L1363.7 752.6L1364.2 764.4L1364.8 760.0L1365.3 766.9L1365.9 759.5L1366.5 755.2L1367.0 757.7L1367.6 764.3L1368.1 751.7L1368.7 762.4L1369.2 756.3L1369.8 762.2L1370.3 755.9L1370.9 752.3L1371.5 750.4L1372.0 772.4L1372.6 753.4L1373.1 769.0L1373.7 752.8L1374.2 769.9L1374.8 756.7L1375.3 755.9L1375.9 751.8L1376.5 766.0L1377.0 751.0L1377.6 766.9L1378.1 749.7L1378.7 765.5L1379.2 751.3L1379.8 749.7L1380.3 758.6L1380.9 751.0L1381.4 757.4L1382.0 758.7L1382.6 751.7L1383.1 758.0L1383.7 754.2L1384.2 756.4L1384.8 752.4L1385.3 748.5L1385.9 751.8L1386.4 756.9L1387.0 755.1L1387.5 748.5L1388.1 759.1L1388.7 765.9L1389.2 758.2L1389.8 763.8L1390.3 756.3L1390.9 757.9L1391.4 752.4L1392.0 760.2L1392.5 749.1L1393.1 767.4L1393.7 756.9L1394.2 765.8L1394.8 756.7L1395.3 763.0L1395.9 753.7L1396.4 767.6L1397.0 759.5L1397.5 759.4L1398.1 751.4L1398.7 765.0L1399.2 755.1L1399.8 761.0L1400.3 753.8L1400.9 759.7L1401.4 754.0L1402.0 753.7L1402.5 756.9L1403.1 761.3L1403.6 758.9L1404.2 762.4L1404.8 751.3L1405.3 759.7L1405.9 757.7L1406.4 765.9L1407.0 757.7L1407.5 754.5L1408.1 752.9L1408.6 747.7L1409.2 755.2L1409.8 760.6L1410.3 757.3L1410.9 750.4L1411.4 756.5L1412.0 751.2L1412.5 750.7L1413.1 758.5L1413.6 752.0L1414.2 767.5L1414.7 749.5L1415.3 750.1L1415.9 752.4L1416.4 756.8L1417.0 758.3L1417.5 755.0L1418.1 750.3L1418.6 765.7L1419.2 748.5L1419.7 760.5L1420.3 749.2L1420.8 756.3L1421.4 760.0L1422.0 753.2L1422.5 754.8L1423.1 760.3L1423.6 748.5L1424.2 749.7L1424.7 748.1L1425.3 768.5L1425.8 754.7L1426.4 762.0L1427.0 756.3L1427.5 767.1L1428.1 757.0L1428.6 762.4L1429.2 757.3L1429.7 766.7L1430.3 757.8L1430.8 759.8L1431.4 755.6L1432.0 760.7L1432.5 752.0L1433.1 760.7L1433.6 753.3L1434.2 765.3L1434.7 755.2L1435.3 756.1L1435.8 754.7L1436.4 762.2L1436.9 753.3L1437.5 749.4L1438.1 755.5L1438.6 755.4L1439.2 755.3L1439.7 754.8L1440.3 751.0L1440.8 761.4L1441.4 757.1L1441.9 764.7L1442.5 752.7L1443.0 770.0L1443.6 757.0L1444.2 765.8L1444.7 756.8L1445.3 766.0L1445.8 751.6L1446.4 759.5L1446.9 755.0L1447.5 758.3L1448.0 752.5L1448.6 757.8L1449.2 752.7L1449.7 758.8L1450.3 757.9L1450.8 768.8L1451.4 756.6L1451.9 753.2L1452.5 757.8L1453.0 755.2L1453.6 755.9L1454.2 756.9L1454.7 752.8L1455.3 761.7L1455.8 756.1L1456.4 759.9L1456.9 759.2L1457.5 763.6L1458.0 753.8L1458.6 761.9L1459.1 754.9L1459.7 755.1L1460.3 748.4L1460.8 756.9L1461.4 762.2L1461.9 764.1L1462.5 758.5L1463.0 768.4L1463.6 752.1L1464.1 762.3L1464.7 755.1L1465.2 765.3L1465.8 755.4L1466.4 763.2L1466.9 754.3L1467.5 766.7L1468.0 756.0L1468.6 760.7L1469.1 756.4L1469.7 758.2L1470.2 754.1L1470.8 764.2L1471.4 754.2L1471.9 760.4L1472.5 750.6L1473.0 750.9L1473.6 754.8L1474.1 767.1L1474.7 755.2L1475.2 769.8L1475.8 750.8L1476.3 761.3L1476.9 760.2L1477.5 760.9L1478.0 753.1L1478.6 758.6L1479.1 760.1L1479.7 761.5L1480.2 752.8L1480.8 766.9L1481.3 756.2L1481.9 757.6L1482.5 744.0L1483.0 768.5L1483.6 749.4L1484.1 760.0L1484.7 757.4L1485.2 758.2L1485.8 751.8L1486.3 765.9L1486.9 754.7L1487.5 766.1L1488.0 750.9L1488.6 767.8L1489.1 755.0L1489.7 765.9L1490.2 753.2L1490.8 751.6L1491.3 755.9L1491.9 752.5L1492.4 756.6L1493.0 769.1L1493.6 749.5L1494.1 755.9L1494.7 753.7L1495.2 769.1L1495.8 752.5L1496.3 766.2L1496.9 758.7L1497.4 760.5L1498.0 757.4L1498.5 754.8L1499.1 750.5L1499.7 764.9L1500.2 756.1L1500.8 764.0L1501.3 753.3L1501.9 744.0L1502.4 752.3L1503.0 764.4L1503.5 756.9L1504.1 766.3L1504.7 748.5L1505.2 772.4L1505.8 753.0L1506.3 755.2L1506.9 751.9L1507.4 762.8L1508.0 754.9L1508.5 766.2L1509.1 752.9L1509.7 767.4L1510.2 755.0L1510.8 748.6L1511.3 757.7L1511.9 762.9L1512.4 760.1L1513.0 757.0L1513.5 759.2L1514.1 756.4L1514.6 753.3L1515.2 752.9L1515.8 752.6L1516.3 766.9L1516.9 753.5L1517.4 766.4L1518.0 750.8L1518.5 762.9L1519.1 753.0L1519.6 750.7L1520.2 753.1L1520.8 766.4L1521.3 754.0L1521.9 759.3L1522.4 756.8L1523.0 754.2L1523.5 748.4L1524.1 755.6L1524.6 759.2L1525.2 749.9L1525.7 755.4L1526.3 769.1L1526.9 754.3L1527.4 765.1L1528.0 749.4L1528.5 768.6L1529.1 759.9L1529.6 769.1L1530.2 753.8L1530.7 758.0L1531.3 751.3L1531.8 744.9L1532.4 750.7L1533.0 762.4L1533.5 757.1L1534.1 757.1L1534.6 757.9L1535.2 750.4L1535.7 758.8L1536.3 766.2L1536.8 759.5L1537.4 765.6L1538.0 748.5L1538.5 761.5L1539.1 756.0L1539.6 762.2L1540.2 761.6L1540.7 755.0L1541.3 756.1L1541.8 768.5L1542.4 755.7L1543.0 758.5L1543.5 747.9L1544.1 762.4L1544.6 754.1L1545.2 758.8L1545.7 755.8L1546.3 756.6L1546.8 749.5L1547.4 762.9L1547.9 749.2L1548.5 769.1L1549.1 756.1L1549.6 719.8L1550.2 754.7L1550.7 758.1L1551.3 759.5L1551.8 762.8L1552.4 753.3L1552.9 762.4L1553.5 748.8L1554.0 754.7L1554.6 748.6L1555.2 760.3L1555.7 752.2L1556.3 763.3L1556.8 752.6L1557.4 763.3L1557.9 752.8L1558.5 748.8L1559.0 747.5L1559.6 761.5L1560.2 757.1L1560.7 764.0L1561.3 755.1L1561.8 766.7L1562.4 759.4L1562.9 763.6L1563.5 754.7L1564.0 759.8L1564.6 751.8L1565.2 758.8L1565.7 754.3L1566.3 765.6L1566.8 757.0L1567.4 756.2L1567.9 760.2L1568.5 754.3L1569.0 756.8L1569.6 765.9L1570.1 756.8L1570.7 762.0L1571.3 752.1L1571.8 759.6L1572.4 751.2L1572.9 765.8L1573.5 749.9L1574.0 765.5L1574.6 751.9L1575.1 750.9L1575.7 753.5L1576.2 752.0L1576.8 751.0L1577.4 766.7L1577.9 757.7L1578.5 766.5L1579.0 753.3L1579.6 752.4L1580.1 753.7L1580.7 758.0L1581.2 757.6L1581.8 761.0L1582.4 754.2L1582.9 752.2L1583.5 755.7L1584.0 754.2L1584.6 749.9L1585.1 755.7L1585.7 752.3L1586.2 755.5L1586.8 757.4L1587.3 764.0L1587.9 758.6L1588.5 766.7L1589.0 750.3L1589.6 761.1L1590.1 755.1L1590.7 759.8L1591.2 752.6L1591.8 766.4L1592.3 753.5L1592.9 753.5L1593.5 751.8L1594.0 767.6L1594.6 757.4L1595.1 756.0L1595.7 748.9L1596.2 759.0L1596.8 747.6L1597.3 767.6L1597.9 751.3L1598.5 758.9L1599.0 757.1L1599.6 751.0L1600.1 757.7L1600.7 761.0L1601.2 751.8L1601.8 768.9L1602.3 752.7L1602.9 756.9L1603.4 756.3L1604.0 766.7L1604.6 758.8L1605.1 756.2L1605.7 757.3L1606.2 759.2L1606.8 754.4L1607.3 764.5L1607.9 755.7L1608.4 751.8L1609.0 745.3L1609.5 756.7L1610.1 751.2L1610.7 752.4L1611.2 753.0L1611.8 766.4L1612.3 756.6L1612.9 767.6L1613.4 752.2L1614.0 759.3L1614.5 756.9L1615.1 748.5L1615.7 754.0L1616.2 769.9L1616.8 750.8L1617.3 764.2L1617.9 754.7L1618.4 757.4L1619.0 758.8L1619.5 763.9L1620.1 751.2L1620.7 755.0L1621.2 755.4L1621.8 761.0L1622.3 754.1L1622.9 759.3L1623.4 757.9L1624.0 758.8L1624.5 758.9L1625.1 763.6L1625.6 759.2L1626.2 756.0L1626.8 753.9L1627.3 719.8L1627.9 753.8L1628.4 759.8L1629.0 751.5L1629.5 763.3L1630.1 756.4L1630.6 763.6L1631.2 755.4L1631.8 757.0L1632.3 755.1L1632.9 760.4L1633.4 752.1L1634.0 758.0L1634.5 756.9L1635.1 760.7L1635.6 757.0L1636.2 765.9L1636.7 751.9L1637.3 753.8L1637.9 752.6L1638.4 760.4L1639.0 757.5L1639.5 763.3L1640.1 753.4L1640.6 761.7L1641.2 756.1L1641.7 761.0L1642.3 750.9L1642.8 754.4L1643.4 749.0L1644.0 764.6L1644.5 752.1L1645.1 766.1L1645.6 757.6L1646.2 769.3L1646.7 750.7L1647.3 767.8L1647.8 756.2L1648.4 750.3L1649.0 752.6L1649.5 762.3L1650.1 759.2L1650.6 765.9L1651.2 756.9L1651.7 754.0L1652.3 753.0L1652.8 761.5L1653.4 755.0L1654.0 757.4L1654.5 751.0L1655.1 764.9L1655.6 756.3L1656.2 769.9L1656.7 755.7L1657.3 754.5L1657.8 754.5L1658.4 758.8L1658.9 764.5L1659.5 766.1L1660.1 755.7L1660.6 768.0L1661.2 757.6L1661.7 765.2L1662.3 760.4L1662.8 753.6L1663.4 758.9L1663.9 759.1L1664.5 752.9L1665.0 765.6L1665.6 759.4L1666.2 710.1L1666.7 757.8L1667.3 752.3L1667.8 753.9L1668.4 760.5L1668.9 754.3L1669.5 765.9L1670.0 754.2L1670.6 763.1L1671.2 755.8L1671.7 757.9L1672.3 744.0L1672.8 765.4L1673.4 749.5L1673.9 764.8L1674.5 754.4L1675.0 769.4L1675.6 759.2L1676.2 768.0L1676.7 747.6L1677.3 762.1L1677.8 750.3L1678.4 755.2L1678.9 756.5L1679.5 749.4L1680.0 751.2L1680.6 761.4L1681.1 753.4L1681.7 770.2L1682.3 754.2L1682.8 763.9L1683.4 749.2L1683.9 767.4L1684.5 751.4L1685.0 753.6L1685.6 757.2L1686.1 761.9L1686.7 748.8L1687.2 760.0L1687.8 758.2L1688.4 762.5L1688.9 754.0L1689.5 749.3L1690.0 756.2L1690.6 757.5L1691.1 752.1L1691.7 762.8L1692.2 751.4L1692.8 763.0L1693.4 751.4L1693.9 767.5L1694.5 754.4L1695.0 764.3L1695.6 758.2L1696.1 764.3L1696.7 757.9L1697.2 766.6L1697.8 753.8L1698.3 749.2L1698.9 751.7L1699.5 764.9L1700.0 753.6L1700.6 752.4L1701.1 749.0L1701.7 758.4L1702.2 754.0L1702.8 750.0L1703.3 758.5L1703.9 758.1L1704.5 750.8L1705.0 767.5L1705.6 717.9L1706.1 762.2L1706.7 751.1L1707.2 762.5L1707.8 754.3L1708.3 758.7L1708.9 752.6L1709.5 759.8L1710.0 750.4L1710.6 754.6L1711.1 758.1L1711.7 765.2L1712.2 752.2L1712.8 751.9L1713.3 754.7L1713.9 770.3L1714.4 757.1L1715.0 754.0L1715.6 759.3L1716.1 761.0L1716.7 753.3L1717.2 766.9L1717.8 757.5L1718.3 755.5L1718.9 751.5L1719.4 762.0L1720.0 751.0L1720.5 762.3L1721.1 757.0L1721.7 749.6L1722.2 757.4L1722.8 754.7L1723.3 751.2L1723.9 763.6L1724.4 758.2L1725.0 765.7L1725.5 751.0L1726.1 761.6L1726.7 755.7L1727.2 763.2L1727.8 749.9L1728.3 769.7L1728.9 753.6L1729.4 754.9L1730.0 757.2L1730.5 756.1L1731.1 752.9L1731.7 766.1L1732.2 756.3L1732.8 763.1L1733.3 749.4L1733.9 762.6L1734.4 756.4L1735.0 770.7L1735.5 758.9L1736.1 763.3L1736.6 763.3L1737.2 751.8L1737.8 757.2L1738.3 768.9L1738.9 755.7L1739.4 758.4L1740.0 755.5L1740.5 753.3L1741.1 751.3L1741.6 763.3L1742.2 748.5L1742.8 764.2L1743.3 750.5L1743.9 761.4L1744.4 751.9L1745.0 766.5L1745.5 757.1L1746.1 772.4L1746.6 755.7L1747.2 768.4L1747.7 757.2L1748.3 750.3L1748.9 745.0L1749.4 767.1L1750.0 758.3L1750.5 769.6L1751.1 756.7L1751.6 761.5L1752.2 752.9L1752.7 751.9L1753.3 756.4L1753.8 750.6L1754.4 754.1L1755.0 761.9L1755.5 750.8L1756.1 764.1L1756.6 754.5L1757.2 764.3L1757.7 748.4L1758.3 763.3L1758.8 753.2L1759.4 766.5L1760.0 754.7L1760.5 759.0L1761.1 756.5L1761.6 751.1L1762.2 755.5L1762.7 762.8L1763.3 756.5L1763.8 758.9L1764.4 757.0L1765.0 744.0L1765.5 754.5L1766.1 764.5L1766.6 751.8L1767.2 755.2L1767.7 752.5L1768.3 762.9L1768.8 757.8L1769.4 758.5L1769.9 752.4L1770.2 762.6" stroke="#0b62aa" stroke-width="1.9" fill="none" stroke-linejoin="round"/>
<path d="M1215.5 786V669.2H1770.5" stroke="#5a5a5a" stroke-width="1.2" fill="none"/>
<path d="M1204 669.2H1213M1204 688.7H1213M1204 727.6H1213M1204 766.5H1213M1204 786.0H1213M1215.5 789V794M1271.0 789V794M1326.5 789V794M1382.0 789V794M1437.5 789V794M1493.0 789V794M1548.5 789V794M1604.0 789V794M1659.5 789V794M1715.0 789V794M1770.5 789V794" stroke="#222" stroke-width="1.3"/>
</svg>
<div class="lvlab" style="left:1104px;width:100px;text-align:right;top:661.7px;font-size:14.5px;letter-spacing:-0.6px">509.5</div>
<div class="lvlab" style="left:1104px;width:100px;text-align:right;top:681.2px;font-size:14.5px;letter-spacing:-0.6px">509</div>
<div class="lvlab" style="left:1104px;width:100px;text-align:right;top:720.1px;font-size:14.5px;letter-spacing:-0.6px">508</div>
<div class="lvlab" style="left:1104px;width:100px;text-align:right;top:759.0px;font-size:14.5px;letter-spacing:-0.6px">507</div>
<div class="lvlab" style="left:1104px;width:100px;text-align:right;top:778.5px;font-size:14.5px;letter-spacing:-0.6px">506.5</div>
<div class="lvlab" style="left:1185.5px;width:60px;text-align:center;top:797px;font-size:14.5px;letter-spacing:-0.4px">0</div>
<div class="lvlab" style="left:1241.0px;width:60px;text-align:center;top:797px;font-size:14.5px;letter-spacing:-0.4px">100</div>
<div class="lvlab" style="left:1296.5px;width:60px;text-align:center;top:797px;font-size:14.5px;letter-spacing:-0.4px">200</div>
<div class="lvlab" style="left:1352.0px;width:60px;text-align:center;top:797px;font-size:14.5px;letter-spacing:-0.4px">300</div>
<div class="lvlab" style="left:1407.5px;width:60px;text-align:center;top:797px;font-size:14.5px;letter-spacing:-0.4px">400</div>
<div class="lvlab" style="left:1463.0px;width:60px;text-align:center;top:797px;font-size:14.5px;letter-spacing:-0.4px">500</div>
<div class="lvlab" style="left:1518.5px;width:60px;text-align:center;top:797px;font-size:14.5px;letter-spacing:-0.4px">600</div>
<div class="lvlab" style="left:1574.0px;width:60px;text-align:center;top:797px;font-size:14.5px;letter-spacing:-0.4px">700</div>
<div class="lvlab" style="left:1629.5px;width:60px;text-align:center;top:797px;font-size:14.5px;letter-spacing:-0.4px">800</div>
<div class="lvlab" style="left:1685.0px;width:60px;text-align:center;top:797px;font-size:14.5px;letter-spacing:-0.4px">900</div>
<div class="lvlab" style="left:1740.5px;width:60px;text-align:center;top:797px;font-size:14.5px;letter-spacing:-0.4px">1000</div>
<div class="lvlab" style="left:1159.4px;top:827.0px;font-size:14.5px;color:#1a1a1a;transform:scaleX(1.025);transform-origin:0 0;">Execution histogram</div>
<div class="a" style="left:1160.0px;top:849.0px;width:637.0px;height:181.0px;border:1px solid #8a8a8a;border-radius:5px;background:#dcdcdc;box-shadow:inset 1px 1px 0 #f8f8f8"></div>
<div class="a" style="left:1201.5px;top:858.5px;width:565.5px;height:126.2px;background:#fff"></div>
<svg style="left:0;top:0" width="1" height="1">
<path d="M1202.6 858.5V984.7M1213.5 858.5V984.7M1224.3 858.5V984.7M1235.1 858.5V984.7M1246.0 858.5V984.7M1256.8 858.5V984.7M1267.7 858.5V984.7M1278.6 858.5V984.7M1289.4 858.5V984.7M1300.2 858.5V984.7M1311.1 858.5V984.7M1322.0 858.5V984.7M1332.8 858.5V984.7M1343.6 858.5V984.7M1354.5 858.5V984.7M1365.3 858.5V984.7M1376.2 858.5V984.7M1387.1 858.5V984.7M1397.9 858.5V984.7M1408.7 858.5V984.7M1419.6 858.5V984.7M1430.5 858.5V984.7M1441.3 858.5V984.7M1452.1 858.5V984.7M1463.0 858.5V984.7M1473.8 858.5V984.7M1484.7 858.5V984.7M1495.6 858.5V984.7M1506.4 858.5V984.7M1517.2 858.5V984.7M1528.1 858.5V984.7M1539.0 858.5V984.7M1549.8 858.5V984.7M1560.6 858.5V984.7M1571.5 858.5V984.7M1582.3 858.5V984.7M1593.2 858.5V984.7M1604.1 858.5V984.7M1614.9 858.5V984.7M1625.7 858.5V984.7M1636.6 858.5V984.7M1647.5 858.5V984.7M1658.3 858.5V984.7M1669.1 858.5V984.7M1680.0 858.5V984.7M1690.8 858.5V984.7M1701.7 858.5V984.7M1712.6 858.5V984.7M1723.4 858.5V984.7M1734.2 858.5V984.7M1745.1 858.5V984.7M1756.0 858.5V984.7M1766.8 858.5V984.7M1201.5 984.7H1767M1201.5 978.4H1767M1201.5 972.1H1767M1201.5 965.8H1767M1201.5 959.5H1767M1201.5 953.2H1767M1201.5 946.8H1767M1201.5 940.5H1767M1201.5 934.2H1767M1201.5 927.9H1767M1201.5 921.6H1767M1201.5 915.3H1767M1201.5 909.0H1767M1201.5 902.7H1767M1201.5 896.4H1767M1201.5 890.0H1767M1201.5 883.7H1767M1201.5 877.4H1767M1201.5 871.1H1767M1201.5 864.8H1767M1201.5 858.5H1767" stroke="#ebebeb" stroke-width="1"/>
<path d="M1202.6 858.5V984.7M1246.0 858.5V984.7M1289.4 858.5V984.7M1332.8 858.5V984.7M1376.2 858.5V984.7M1419.6 858.5V984.7M1463.0 858.5V984.7M1506.4 858.5V984.7M1549.8 858.5V984.7M1593.2 858.5V984.7M1636.6 858.5V984.7M1680.0 858.5V984.7M1723.4 858.5V984.7M1766.8 858.5V984.7M1201.5 953.2H1767M1201.5 921.6H1767M1201.5 890.0H1767" stroke="#d0d0d0" stroke-width="1"/>
<path d="M1227.44 984.7V972.1H1229.35V984.7ZM1229.35 984.7V983.1H1232.22V984.7ZM1232.22 984.7V981.5H1235.09V984.7ZM1235.09 984.7V978.4H1237.00V984.7ZM1237.00 984.7V983.1H1242.73V984.7ZM1242.73 984.7V978.4H1244.65V984.7ZM1244.65 984.7V981.5H1247.51V984.7ZM1247.51 984.7V978.4H1249.43V984.7ZM1249.43 984.7V968.9H1252.29V984.7ZM1252.29 984.7V972.1H1254.78V984.7ZM1254.78 984.7V968.9H1257.07V984.7ZM1257.07 984.7V975.2H1259.94V984.7ZM1259.94 984.7V931.1H1262.43V984.7ZM1263.96 984.7V943.7H1266.63V984.7ZM1266.63 984.7V946.8H1268.55V984.7ZM1268.55 984.7V905.8H1271.41V984.7ZM1271.41 984.7V912.1H1273.90V984.7ZM1273.90 984.7V877.4H1276.20V984.7ZM1276.20 984.7V924.8H1278.49V984.7ZM1278.49 984.7V893.2H1281.55V984.7ZM1281.55 984.7V886.9H1283.84V984.7ZM1283.84 984.7V893.2H1286.14V984.7ZM1286.14 984.7V880.6H1288.62V984.7ZM1288.62 984.7V858.5H1291.49V984.7ZM1291.49 984.7V893.2H1293.79V984.7ZM1293.79 984.7V912.1H1296.27V984.7ZM1296.27 984.7V909.0H1301.05V984.7ZM1301.05 984.7V940.5H1303.92V984.7ZM1303.92 984.7V943.7H1306.41V984.7ZM1306.41 984.7V937.4H1308.70V984.7ZM1308.70 984.7V943.7H1311.57V984.7ZM1311.57 984.7V946.8H1316.35V984.7ZM1316.35 984.7V943.7H1318.64V984.7ZM1318.64 984.7V946.8H1321.13V984.7ZM1322.47 984.7V956.3H1324.95V984.7ZM1324.95 984.7V968.9H1327.44V984.7ZM1327.44 984.7V959.5H1329.73V984.7ZM1329.73 984.7V962.6H1332.60V984.7ZM1332.60 984.7V953.2H1335.09V984.7ZM1335.09 984.7V943.7H1337.38V984.7ZM1337.38 984.7V953.2H1339.87V984.7ZM1339.87 984.7V924.8H1342.16V984.7ZM1342.16 984.7V934.2H1344.65V984.7ZM1344.65 984.7V921.6H1346.94V984.7ZM1346.94 984.7V902.7H1349.43V984.7ZM1349.43 984.7V899.5H1352.10V984.7ZM1352.10 984.7V953.2H1354.59V984.7ZM1354.59 984.7V927.9H1357.07V984.7ZM1357.07 984.7V912.1H1359.37V984.7ZM1359.37 984.7V921.6H1362.24V984.7ZM1362.24 984.7V915.3H1364.15V984.7ZM1364.15 984.7V915.3H1367.02V984.7ZM1367.02 984.7V912.1H1369.50V984.7ZM1369.50 984.7V931.1H1371.80V984.7ZM1371.80 984.7V899.5H1374.67V984.7ZM1374.67 984.7V940.5H1377.53V984.7ZM1377.53 984.7V943.7H1380.02V984.7ZM1380.98 984.7V953.2H1383.65V984.7ZM1383.65 984.7V959.5H1386.14V984.7ZM1386.14 984.7V946.8H1388.62V984.7ZM1388.62 984.7V940.5H1390.92V984.7ZM1390.92 984.7V959.5H1393.79V984.7ZM1393.79 984.7V968.9H1396.27V984.7ZM1396.27 984.7V981.5H1401.43V984.7ZM1401.43 984.7V972.1H1403.92V984.7ZM1403.92 984.7V981.5H1415.77V984.7ZM1415.77 984.7V978.4H1418.64V984.7ZM1418.64 984.7V981.5H1421.51V984.7ZM1421.51 984.7V981.5H1426.29V984.7ZM1426.29 984.7V983.1H1429.16V984.7ZM1429.16 984.7V981.5H1431.07V984.7ZM1431.07 984.7V983.1H1436.81V984.7ZM1436.81 984.7V981.5H1438.72V984.7ZM1440.1 984.7V982.8H1442.5V984.7ZM1459.6 984.7V981.5H1462.0V984.7ZM1470.5 984.7V981.5H1472.9V984.7ZM1505.2 984.7V981.5H1507.6V984.7ZM1557.3 984.7V981.5H1559.7V984.7ZM1568.1 984.7V981.5H1570.5V984.7ZM1602.8 984.7V981.5H1605.2V984.7ZM1737.4 984.7V978.4H1739.8V984.7Z" fill="#0b5ea8"/>
<path d="M1423.9 983.9H1738.6" stroke="#0b5ea8" stroke-width="1.3"/>
<path d="M1201.5 984.7V858.5H1767" stroke="#5a5a5a" stroke-width="1.2" fill="none"/>
<path d="M1190 984.7H1200M1190 953.2H1200M1190 921.6H1200M1190 890.0H1200M1190 858.5H1200M1202.6 986V993M1246.0 986V993M1289.4 986V993M1332.8 986V993M1376.2 986V993M1419.6 986V993M1463.0 986V993M1506.4 986V993M1549.8 986V993M1593.2 986V993M1636.6 986V993M1680.0 986V993M1723.4 986V993M1766.8 986V993" stroke="#222" stroke-width="1.3"/>
</svg>
<div class="lvlab" style="left:1090px;width:100px;text-align:right;top:977.2px;font-size:14.5px;letter-spacing:-0.5px">0</div>
<div class="lvlab" style="left:1090px;width:100px;text-align:right;top:945.7px;font-size:14.5px;letter-spacing:-0.5px">10</div>
<div class="lvlab" style="left:1090px;width:100px;text-align:right;top:914.1px;font-size:14.5px;letter-spacing:-0.5px">20</div>
<div class="lvlab" style="left:1090px;width:100px;text-align:right;top:882.5px;font-size:14.5px;letter-spacing:-0.5px">30</div>
<div class="lvlab" style="left:1090px;width:100px;text-align:right;top:851.0px;font-size:14.5px;letter-spacing:-0.5px">40</div>
<div class="lvlab" style="left:1172.6px;width:60px;text-align:center;top:995px;font-size:14.5px;letter-spacing:-0.6px">506.6</div>
<div class="lvlab" style="left:1216.0px;width:60px;text-align:center;top:995px;font-size:14.5px;letter-spacing:-0.6px">506.8</div>
<div class="lvlab" style="left:1259.4px;width:60px;text-align:center;top:995px;font-size:14.5px;letter-spacing:-0.6px">507.0</div>
<div class="lvlab" style="left:1302.8px;width:60px;text-align:center;top:995px;font-size:14.5px;letter-spacing:-0.6px">507.2</div>
<div class="lvlab" style="left:1346.2px;width:60px;text-align:center;top:995px;font-size:14.5px;letter-spacing:-0.6px">507.4</div>
<div class="lvlab" style="left:1389.6px;width:60px;text-align:center;top:995px;font-size:14.5px;letter-spacing:-0.6px">507.6</div>
<div class="lvlab" style="left:1433.0px;width:60px;text-align:center;top:995px;font-size:14.5px;letter-spacing:-0.6px">507.8</div>
<div class="lvlab" style="left:1476.4px;width:60px;text-align:center;top:995px;font-size:14.5px;letter-spacing:-0.6px">508.0</div>
<div class="lvlab" style="left:1519.8px;width:60px;text-align:center;top:995px;font-size:14.5px;letter-spacing:-0.6px">508.2</div>
<div class="lvlab" style="left:1563.2px;width:60px;text-align:center;top:995px;font-size:14.5px;letter-spacing:-0.6px">508.4</div>
<div class="lvlab" style="left:1606.6px;width:60px;text-align:center;top:995px;font-size:14.5px;letter-spacing:-0.6px">508.6</div>
<div class="lvlab" style="left:1650.0px;width:60px;text-align:center;top:995px;font-size:14.5px;letter-spacing:-0.6px">508.8</div>
<div class="lvlab" style="left:1693.4px;width:60px;text-align:center;top:995px;font-size:14.5px;letter-spacing:-0.6px">509.0</div>
<div class="lvlab" style="left:1736.8px;width:60px;text-align:center;top:995px;font-size:14.5px;letter-spacing:-0.6px">509.2</div>
<div class="a" style="left:1830.0px;top:317.0px;width:19.0px;height:703.0px;background:#f0f0f0"></div>
<div class="a" style="left:1831.0px;top:317.0px;width:18.0px;height:597.0px;background:#cdcdcd"></div>
<div class="a" style="left:1176.0px;top:0.0px;width:687.0px;height:612.0px;background:#f0f0f0"></div>
<div class="a" style="left:1176.0px;top:0.0px;width:1.0px;height:612.0px;background:#5a5a5a"></div>
<div class="a" style="left:1177.0px;top:0.0px;width:686.0px;height:34.0px;background:#fff"></div>
<svg style="left:1190px;top:4px" width="20" height="20" viewBox="0 0 20 20"><rect x="0" y="0" width="20" height="20" rx="1.5" fill="#505356"/><path d="M4 3.5L17 10L4 16.5Z" fill="#f3d21a"/><circle cx="8" cy="10" r="1.2" fill="#8a6a10"/></svg>
<div class="lvlab" style="left:1215.7px;top:7.8px;font-size:14.36px;color:#111;transform:scaleX(0.998);transform-origin:0 0;">InitializeTask.vi Front Panel on Benchmark Project_junk1.lvproj/RT Targ...</div>
<div class="a" style="left:1713.0px;top:14.0px;width:13.0px;height:1.0px;background:#222"></div>
<div class="a" style="left:1771.0px;top:8.0px;width:13.0px;height:13.0px;border:1px solid #222"></div>
<svg style="left:1829px;top:7px" width="14" height="14"><path d="M0.5 0.5L13.5 13.5M13.5 0.5L0.5 13.5" stroke="#222" stroke-width="1.1"/></svg>
<div class="lvlab" style="left:1186.0px;top:38.7px;font-size:14.5px;color:#1a1a1a;">File</div>
<div class="lvlab" style="left:1226.0px;top:38.7px;font-size:14.5px;color:#1a1a1a;">Edit</div>
<div class="lvlab" style="left:1268.0px;top:38.7px;font-size:14.5px;color:#1a1a1a;">View</div>
<div class="lvlab" style="left:1317.0px;top:38.7px;font-size:14.5px;color:#1a1a1a;">Project</div>
<div class="lvlab" style="left:1381.0px;top:38.7px;font-size:14.5px;color:#1a1a1a;">Operate</div>
<div class="lvlab" style="left:1451.0px;top:38.7px;font-size:14.5px;color:#1a1a1a;">Tools</div>
<div class="lvlab" style="left:1504.0px;top:38.7px;font-size:14.5px;color:#1a1a1a;">Window</div>
<div class="lvlab" style="left:1576.0px;top:38.7px;font-size:14.5px;color:#1a1a1a;">Help</div>
<div class="a" style="left:1177.0px;top:60.0px;width:606.0px;height:1.0px;background:#cfcfcf"></div>
<div class="a" style="left:1782.0px;top:35.0px;width:1.0px;height:56.0px;background:#b8b8b8"></div>
<svg style="left:1246px;top:69px" width="16" height="16" viewBox="0 0 16 16"><path d="M1 5.5H8V1.5L15 8L8 14.5V10.5H1Z" fill="#fff" stroke="#111" stroke-width="1.4" stroke-linejoin="round"/></svg>
<svg style="left:1271px;top:67px" width="20" height="18" viewBox="0 0 20 18"><path d="M4 10V5.5H12V2.5L17 7L12 11.5V8.5H7V10Z" fill="#fff" stroke="#111" stroke-width="1.3" stroke-linejoin="round"/><path d="M16 8V12.5H8V15.5L3 11L8 6.5V9.5H13V8Z" fill="#fff" stroke="#111" stroke-width="1.3" stroke-linejoin="round"/></svg>
<svg style="left:0;top:0" width="1" height="1"><circle cx="1312.3" cy="76.6" r="9.5" fill="#e8b4b8" stroke="#c4c4c4" stroke-width="1.5"/><circle cx="1312.3" cy="76.6" r="7.0" fill="#eaa6ab"/></svg>
<div class="a" style="left:1333.0px;top:70.0px;width:4.0px;height:13.0px;background:#111"></div>
<div class="a" style="left:1341.0px;top:70.0px;width:4.0px;height:13.0px;background:#111"></div>
<div class="a" style="left:1360.0px;top:64.5px;width:183.0px;height:25.0px;background:#f4f4f4;border:1px solid #a0a0a0"></div>
<div class="lvlab" style="left:1368.0px;top:69.7px;font-size:14.5px;color:#111;transform:scaleX(1.043);transform-origin:0 0;">15pt Application Font</div>
<svg style="left:1525px;top:73px" width="9" height="6"><path d="M0 0H9L4.5 5.5Z" fill="#222"/></svg>
<svg style="left:1552px;top:66px" width="32" height="22" viewBox="0 0 32 22"><rect x="1" y="1" width="5" height="5" fill="#8ad0e8" stroke="#333" stroke-width="0.8"/><path d="M3.5 7V15M1 12L3.5 15L6 12M1 17H14" stroke="#222" stroke-width="1.2" fill="none"/><rect x="8" y="12" width="9" height="5" fill="#f4f0a0" stroke="#333" stroke-width="0.8"/><path d="M22 7H28L25 11Z" fill="#222"/></svg>
<svg style="left:1596px;top:66px" width="32" height="22" viewBox="0 0 32 22"><path d="M1 4Q8 0 16 4" stroke="#333" stroke-width="1" fill="none"/><rect x="1" y="10" width="3" height="3" fill="#222"/><rect x="6" y="5" width="4" height="12" fill="#f4f0a0" stroke="#333" stroke-width="0.8"/><rect x="11" y="10" width="6" height="6" fill="#8ad0e8" stroke="#333" stroke-width="0.8"/><path d="M22 7H28L25 11Z" fill="#222"/></svg>
<svg style="left:1641px;top:66px" width="32" height="22" viewBox="0 0 32 22"><rect x="8" y="2" width="5" height="10" fill="#f4f0a0" stroke="#333" stroke-width="0.8"/><path d="M1 7H7M14 7H20M1 5V9M20 5V9" stroke="#222" stroke-width="1.2"/><rect x="1" y="12" width="20" height="4" fill="#8ad0e8" stroke="#2a6a9a" stroke-width="0.8"/><path d="M23 7H29L26 11Z" fill="#222"/></svg>
<svg style="left:1687px;top:64px" width="60" height="24" viewBox="0 0 60 24"><path d="M4 12A7 7 0 0 1 14 5" stroke="#e8d820" stroke-width="4" fill="none"/><path d="M16 8A7 7 0 0 1 8 19" stroke="#40a8d8" stroke-width="4" fill="none"/><path d="M2 14L4 19L8 14Z" fill="#e8d820"/><path d="M15 5L12 2L17 3Z" fill="#40a8d8"/><path d="M29 10L33 8V12Z" fill="#222"/><circle cx="42" cy="10" r="6.5" fill="#d8eef8" stroke="#6aa0c8" stroke-width="1.6"/><path d="M47 15L53 21" stroke="#c89060" stroke-width="3"/></svg>
<svg style="left:1760px;top:66px" width="16" height="22" viewBox="0 0 16 22"><path d="M3 7Q3 2 8 2Q13 2 13 6.5Q13 9 10 11Q8 12.5 8 15" stroke="#e0d010" stroke-width="3" fill="none" stroke-linecap="round"/><circle cx="8" cy="19" r="1.8" fill="#e0d010"/><path d="M3 7Q3 2 8 2Q13 2 13 6.5Q13 9 10 11Q8 12.5 8 15" stroke="#8a7a00" stroke-width="0.6" fill="none"/></svg>
<div class="a" style="left:1785.0px;top:43.0px;width:40.0px;height:40.0px;background:#fff;border:2px solid #111"></div>
<svg style="left:1785px;top:43px" width="40" height="40"><path d="M2 11H13M2 22H13M2 31H13M13 2V38M25 2V38" stroke="#111" stroke-width="1.5"/><rect x="27" y="3" width="10" height="9" fill="#6a2a9a"/><rect x="27" y="12" width="10" height="9" fill="#1a2ad8"/><rect x="27" y="30" width="10" height="8" fill="#6a6a20"/><path d="M26 2V38" stroke="#111" stroke-width="2"/></svg>
<div class="a" style="left:1826.0px;top:43.0px;width:37.0px;height:41.0px;background:#fff;border:1px solid #333"></div>
<svg style="left:1828px;top:45px" width="35" height="38"><rect x="2" y="2" width="22" height="16" fill="#7a8a8a" stroke="#333" stroke-width="0.8"/><rect x="4" y="4" width="14" height="11" fill="#102a10"/><path d="M5 12Q8 4 10 10T16 7" stroke="#30e030" stroke-width="1" fill="none"/><path d="M2 24Q8 30 14 24" stroke="#2a40c8" stroke-width="1.2" fill="none"/><path d="M8 22H34" stroke="#e04a20" stroke-width="1.2"/><path d="M20 17L30 23L20 29Z" fill="#f0e020" stroke="#807000" stroke-width="0.8"/><text x="25" y="37" font-size="9" font-family="Liberation Sans" fill="#111">1</text></svg>
<div class="a" style="left:1177.0px;top:90.0px;width:669.0px;height:1.0px;background:#bdbdbd"></div>
<div class="grid" style="left:1177px;top:91px;width:669px;height:501px;background-position:14px 1px"></div>
<div class="lvlab" style="left:1179.0px;top:96.7px;font-size:14.5px;color:#1a1a1a;transform:scaleX(1.050);transform-origin:0 0;">sampling info</div>
<div class="a" style="left:1177.0px;top:227.0px;width:89.0px;height:58.0px;background:rgba(250,250,250,0.55);border-radius:6px 0 0 0"></div>
<div class="a" style="left:1182.0px;top:121.5px;width:83.0px;height:105.0px;background:#bfbfbf;border:1px solid #b0b0b0;box-shadow:inset 1px 1px 0 #d8d8d8, 1px 1px 0 #a0a0a0"></div>
<div class="a" style="left:1183.0px;top:122.0px;width:81.0px;height:25.0px;background:#b4b4b4;box-shadow:inset 0 -2px 0 #aaaaaa"></div>
<div class="a" style="left:1183.0px;top:174.0px;width:81.0px;height:23.0px;background:#b4b4b4;box-shadow:inset 0 -2px 0 #aaaaaa"></div>
<div class="lvlab" style="left:1198.0px;top:127.7px;font-size:14.5px;color:#1a1a1a;">Fs</div>
<div class="lvlab" style="left:1197.0px;top:178.7px;font-size:14.5px;color:#1a1a1a;">#s</div>
<svg style="left:0;top:0" width="1" height="1"><ellipse cx="1191.0" cy="158.5" rx="8.0" ry="13.5" fill="#b4b4b4" stroke="#8e8e8e" stroke-width="1"/><ellipse cx="1190.0" cy="158.5" rx="4.8" ry="11.5" fill="#cacaca"/><path d="M1188.0 155.5L1191.0 149.0L1193.0 155.5M1188.0 161.5L1191.0 168.0L1193.0 161.5M1185.0 158.5H1197.0" stroke="#8a8a8a" stroke-width="1" fill="none"/></svg>
<div class="a" style="left:1201.5px;top:148.5px;width:58.5px;height:22.0px;background:#fcfcfc"></div>
<div class="lvlab" style="left:1204.0px;top:152.7px;font-size:14.5px;color:#1a1a1a;transform:scaleX(0.958);transform-origin:0 0;">2.00M</div>
<svg style="left:0;top:0" width="1" height="1"><ellipse cx="1191.0" cy="209.5" rx="8.0" ry="13.5" fill="#b4b4b4" stroke="#8e8e8e" stroke-width="1"/><ellipse cx="1190.0" cy="209.5" rx="4.8" ry="11.5" fill="#cacaca"/><path d="M1188.0 206.5L1191.0 200.0L1193.0 206.5M1188.0 212.5L1191.0 219.0L1193.0 212.5M1185.0 209.5H1197.0" stroke="#8a8a8a" stroke-width="1" fill="none"/></svg>
<div class="a" style="left:1201.5px;top:200.0px;width:58.5px;height:21.0px;background:#fcfcfc"></div>
<div class="lvlab" style="left:1204.0px;top:203.7px;font-size:14.5px;color:#1a1a1a;transform:scaleX(0.905);transform-origin:0 0;">1000</div>
<div class="lvlab" style="left:1191.8px;top:236.1px;font-size:14.5px;color:#1a1a1a;transform:scaleX(1.041);transform-origin:0 0;">frequency</div>
<svg style="left:0;top:0" width="1" height="1"><ellipse cx="1186.0" cy="269.5" rx="7.0" ry="15.5" fill="#b4b4b4" stroke="#8e8e8e" stroke-width="1"/><ellipse cx="1185.0" cy="269.5" rx="4.2" ry="13.2" fill="#cacaca"/><path d="M1183.0 266.5L1186.0 258.0L1188.0 266.5M1183.0 272.5L1186.0 281.0L1188.0 272.5M1181.0 269.5H1191.0" stroke="#8a8a8a" stroke-width="1" fill="none"/></svg>
<div class="a" style="left:1195.0px;top:258.3px;width:58.0px;height:21.7px;background:#fcfcfc"></div>
<div class="lvlab" style="left:1197.0px;top:262.7px;font-size:14.5px;color:#1a1a1a;transform:scaleX(0.910);transform-origin:0 0;">10.00k</div>
<div class="lvlab" style="left:1287.9px;top:96.7px;font-size:14.5px;color:#1a1a1a;transform:scaleX(1.039);transform-origin:0 0;">amplitude</div>
<div class="a" style="left:1270.0px;top:114.0px;width:84.0px;height:32.0px;background:rgba(250,250,250,0.5);border-radius:5px"></div>
<svg style="left:0;top:0" width="1" height="1"><ellipse cx="1279.8" cy="127.7" rx="7.2" ry="14.9" fill="#b4b4b4" stroke="#8e8e8e" stroke-width="1"/><ellipse cx="1278.8" cy="127.7" rx="4.3" ry="12.6" fill="#cacaca"/><path d="M1276.8 124.7L1279.8 116.8L1281.8 124.7M1276.8 130.7L1279.8 138.5L1281.8 130.7M1274.6 127.7H1285.0" stroke="#8a8a8a" stroke-width="1" fill="none"/></svg>
<div class="a" style="left:1291.0px;top:118.7px;width:57.3px;height:21.8px;background:#fcfcfc"></div>
<div class="lvlab" style="left:1292.0px;top:122.7px;font-size:14.5px;color:#1a1a1a;transform:scaleX(0.902);transform-origin:0 0;">1.00k</div>
<div class="lvlab" style="left:1372.4px;top:96.7px;font-size:14.5px;color:#1a1a1a;transform:scaleX(1.060);transform-origin:0 0;">offset</div>
<div class="a" style="left:1355.0px;top:114.0px;width:84.0px;height:32.0px;background:rgba(250,250,250,0.5);border-radius:5px"></div>
<svg style="left:0;top:0" width="1" height="1"><ellipse cx="1364.9" cy="127.7" rx="7.1" ry="14.9" fill="#b4b4b4" stroke="#8e8e8e" stroke-width="1"/><ellipse cx="1363.9" cy="127.7" rx="4.3" ry="12.6" fill="#cacaca"/><path d="M1361.9 124.7L1364.9 116.8L1366.9 124.7M1361.9 130.7L1364.9 138.5L1366.9 130.7M1359.8 127.7H1370.0" stroke="#8a8a8a" stroke-width="1" fill="none"/></svg>
<div class="a" style="left:1375.0px;top:118.7px;width:58.4px;height:21.8px;background:#fcfcfc"></div>
<div class="lvlab" style="left:1377.0px;top:122.7px;font-size:14.5px;color:#1a1a1a;transform:scaleX(0.902);transform-origin:0 0;">1.10k</div>
<div class="lvlab" style="left:1458.9px;top:104.5px;font-size:13.2px;color:#1a1a1a;transform:scaleX(0.960);transform-origin:0 0;">Sample Clock Source</div>
<div class="a" style="left:1465.3px;top:126.6px;width:336.7px;height:34.8px;border-radius:6px;background:rgba(0,0,0,0.12)"></div>
<div class="a" style="left:1463.3px;top:124.6px;width:336.7px;height:34.8px;border-radius:6px;background:linear-gradient(#f6f6f6,#e2e2e2);border:1px solid #a8a8a8;box-shadow:inset 0 1px 0 #fff"></div>
<div class="a" style="left:1472.2px;top:129.7px;width:299.2px;height:23.7px;background:#fff;border:1px solid #8c8c8c;box-shadow:inset 1px 1px 0 #b0b0b0"></div>
<div class="a" style="left:1473.2px;top:130.7px;width:13.0px;height:21.7px;background:#dcdcdc"></div>
<svg style="left:1473.2px;top:131.7px" width="13" height="20"><text x="1" y="9" font-size="9" font-family="Liberation Serif" fill="#777">I</text><path d="M2 17L10 5" stroke="#888" stroke-width="0.8"/><text x="6" y="18" font-size="9" font-family="Liberation Serif" fill="#777">0</text></svg>
<div class="lvlab" style="left:1487.2px;top:134.6px;font-size:14.5px;color:#1a1a1a;transform:scaleX(0.909);transform-origin:0 0;">/6723/20MHzTimebase</div>
<div class="a" style="left:1777.6px;top:133.4px;width:15.0px;height:16.0px;border:1px solid #9a9a9a;border-radius:3px;background:linear-gradient(#fdfdfd,#e4e4e4)"></div>
<svg style="left:1781.6px;top:139.4px" width="8" height="5"><path d="M0 0H7L3.5 4Z" fill="#555"/></svg>
<div class="lvlab" style="left:1301.7px;top:173.7px;font-size:14.5px;color:#1a1a1a;transform:scaleX(1.019);transform-origin:0 0;">Waveform Graph</div>
<div class="a" style="left:1291.0px;top:194.0px;width:410.0px;height:272.0px;background:linear-gradient(90deg,#dedede 0,#c3c3c3 15px,#c3c3c3 calc(100% - 22px),#9a9a9a 100%);box-shadow:inset 0 4px 0 #d2d2d2, inset 0 -3px 0 #a6a6a6"></div>
<div class="a" style="left:1387.3px;top:205.6px;width:283.7px;height:208.2px;background:#000;border-left:1px solid #a0a0a0"></div>
<svg style="left:0;top:0" width="1" height="1">
<path d="M1402.4 205.6V413.8M1416.6 205.6V413.8M1430.7 205.6V413.8M1459.0 205.6V413.8M1473.1 205.6V413.8M1487.2 205.6V413.8M1515.5 205.6V413.8M1529.7 205.6V413.8M1543.8 205.6V413.8M1572.1 205.6V413.8M1586.2 205.6V413.8M1600.3 205.6V413.8M1628.6 205.6V413.8M1642.7 205.6V413.8M1656.9 205.6V413.8M1388.3 403.4H1671M1388.3 393.0H1671M1388.3 382.6H1671M1388.3 361.8H1671M1388.3 351.3H1671M1388.3 340.9H1671M1388.3 320.1H1671M1388.3 309.7H1671M1388.3 299.3H1671M1388.3 278.5H1671M1388.3 268.1H1671M1388.3 257.6H1671M1388.3 236.8H1671M1388.3 226.4H1671M1388.3 216.0H1671" stroke="#0b4c0b" stroke-width="1"/>
<path d="M1388.3 205.6V413.8M1388.3 413.8H1671M1444.8 205.6V413.8M1388.3 372.2H1671M1501.4 205.6V413.8M1388.3 330.5H1671M1557.9 205.6V413.8M1388.3 288.9H1671M1614.5 205.6V413.8M1388.3 247.2H1671M1671.0 205.6V413.8M1388.3 205.6H1671" stroke="#1a921a" stroke-width="1"/>
<path d="M1388.3 322.2L1388.6 319.6L1388.9 317.0L1389.1 314.4L1389.4 311.8L1389.7 309.2L1390.0 306.6L1390.3 304.0L1390.6 301.5L1390.8 299.0L1391.1 296.5L1391.4 294.0L1391.7 291.5L1392.0 289.1L1392.3 286.7L1392.5 284.4L1392.8 282.1L1393.1 279.8L1393.4 277.6L1393.7 275.4L1394.0 273.2L1394.2 271.1L1394.5 269.1L1394.8 267.1L1395.1 265.2L1395.4 263.3L1395.7 261.5L1395.9 259.7L1396.2 258.0L1396.5 256.4L1396.8 254.8L1397.1 253.3L1397.3 251.9L1397.6 250.5L1397.9 249.2L1398.2 248.0L1398.5 246.8L1398.8 245.8L1399.0 244.8L1399.3 243.8L1399.6 243.0L1399.9 242.2L1400.2 241.5L1400.5 240.9L1400.7 240.4L1401.0 239.9L1401.3 239.6L1401.6 239.3L1401.9 239.1L1402.2 239.0L1402.4 238.9L1402.7 239.0L1403.0 239.1L1403.3 239.3L1403.6 239.6L1403.8 239.9L1404.1 240.4L1404.4 240.9L1404.7 241.5L1405.0 242.2L1405.3 243.0L1405.5 243.8L1405.8 244.8L1406.1 245.8L1406.4 246.8L1406.7 248.0L1407.0 249.2L1407.2 250.5L1407.5 251.9L1407.8 253.3L1408.1 254.8L1408.4 256.4L1408.7 258.0L1408.9 259.7L1409.2 261.5L1409.5 263.3L1409.8 265.2L1410.1 267.1L1410.4 269.1L1410.6 271.1L1410.9 273.2L1411.2 275.4L1411.5 277.6L1411.8 279.8L1412.0 282.1L1412.3 284.4L1412.6 286.7L1412.9 289.1L1413.2 291.5L1413.5 294.0L1413.7 296.5L1414.0 299.0L1414.3 301.5L1414.6 304.0L1414.9 306.6L1415.2 309.2L1415.4 311.8L1415.7 314.4L1416.0 317.0L1416.3 319.6L1416.6 322.2L1416.9 324.8L1417.1 327.4L1417.4 330.0L1417.7 332.6L1418.0 335.2L1418.3 337.8L1418.5 340.4L1418.8 342.9L1419.1 345.4L1419.4 347.9L1419.7 350.4L1420.0 352.8L1420.2 355.3L1420.5 357.7L1420.8 360.0L1421.1 362.3L1421.4 364.6L1421.7 366.8L1421.9 369.0L1422.2 371.1L1422.5 373.2L1422.8 375.3L1423.1 377.3L1423.4 379.2L1423.6 381.1L1423.9 382.9L1424.2 384.7L1424.5 386.4L1424.8 388.0L1425.1 389.6L1425.3 391.1L1425.6 392.5L1425.9 393.9L1426.2 395.2L1426.5 396.4L1426.7 397.5L1427.0 398.6L1427.3 399.6L1427.6 400.5L1427.9 401.4L1428.2 402.2L1428.4 402.9L1428.7 403.5L1429.0 404.0L1429.3 404.4L1429.6 404.8L1429.9 405.1L1430.1 405.3L1430.4 405.4L1430.7 405.5L1431.0 405.4L1431.3 405.3L1431.6 405.1L1431.8 404.8L1432.1 404.4L1432.4 404.0L1432.7 403.5L1433.0 402.9L1433.2 402.2L1433.5 401.4L1433.8 400.5L1434.1 399.6L1434.4 398.6L1434.7 397.5L1434.9 396.4L1435.2 395.2L1435.5 393.9L1435.8 392.5L1436.1 391.1L1436.4 389.6L1436.6 388.0L1436.9 386.4L1437.2 384.7L1437.5 382.9L1437.8 381.1L1438.1 379.2L1438.3 377.3L1438.6 375.3L1438.9 373.2L1439.2 371.1L1439.5 369.0L1439.8 366.8L1440.0 364.6L1440.3 362.3L1440.6 360.0L1440.9 357.7L1441.2 355.3L1441.4 352.8L1441.7 350.4L1442.0 347.9L1442.3 345.4L1442.6 342.9L1442.9 340.4L1443.1 337.8L1443.4 335.2L1443.7 332.6L1444.0 330.0L1444.3 327.4L1444.6 324.8L1444.8 322.2L1445.1 319.6L1445.4 317.0L1445.7 314.4L1446.0 311.8L1446.3 309.2L1446.5 306.6L1446.8 304.0L1447.1 301.5L1447.4 299.0L1447.7 296.5L1447.9 294.0L1448.2 291.5L1448.5 289.1L1448.8 286.7L1449.1 284.4L1449.4 282.1L1449.6 279.8L1449.9 277.6L1450.2 275.4L1450.5 273.2L1450.8 271.1L1451.1 269.1L1451.3 267.1L1451.6 265.2L1451.9 263.3L1452.2 261.5L1452.5 259.7L1452.8 258.0L1453.0 256.4L1453.3 254.8L1453.6 253.3L1453.9 251.9L1454.2 250.5L1454.5 249.2L1454.7 248.0L1455.0 246.8L1455.3 245.8L1455.6 244.8L1455.9 243.8L1456.1 243.0L1456.4 242.2L1456.7 241.5L1457.0 240.9L1457.3 240.4L1457.6 239.9L1457.8 239.6L1458.1 239.3L1458.4 239.1L1458.7 239.0L1459.0 238.9L1459.3 239.0L1459.5 239.1L1459.8 239.3L1460.1 239.6L1460.4 239.9L1460.7 240.4L1461.0 240.9L1461.2 241.5L1461.5 242.2L1461.8 243.0L1462.1 243.8L1462.4 244.8L1462.7 245.8L1462.9 246.8L1463.2 248.0L1463.5 249.2L1463.8 250.5L1464.1 251.9L1464.3 253.3L1464.6 254.8L1464.9 256.4L1465.2 258.0L1465.5 259.7L1465.8 261.5L1466.0 263.3L1466.3 265.2L1466.6 267.1L1466.9 269.1L1467.2 271.1L1467.5 273.2L1467.7 275.4L1468.0 277.6L1468.3 279.8L1468.6 282.1L1468.9 284.4L1469.2 286.7L1469.4 289.1L1469.7 291.5L1470.0 294.0L1470.3 296.5L1470.6 299.0L1470.8 301.5L1471.1 304.0L1471.4 306.6L1471.7 309.2L1472.0 311.8L1472.3 314.4L1472.5 317.0L1472.8 319.6L1473.1 322.2L1473.4 324.8L1473.7 327.4L1474.0 330.0L1474.2 332.6L1474.5 335.2L1474.8 337.8L1475.1 340.4L1475.4 342.9L1475.7 345.4L1475.9 347.9L1476.2 350.4L1476.5 352.8L1476.8 355.3L1477.1 357.7L1477.4 360.0L1477.6 362.3L1477.9 364.6L1478.2 366.8L1478.5 369.0L1478.8 371.1L1479.0 373.2L1479.3 375.3L1479.6 377.3L1479.9 379.2L1480.2 381.1L1480.5 382.9L1480.7 384.7L1481.0 386.4L1481.3 388.0L1481.6 389.6L1481.9 391.1L1482.2 392.5L1482.4 393.9L1482.7 395.2L1483.0 396.4L1483.3 397.5L1483.6 398.6L1483.9 399.6L1484.1 400.5L1484.4 401.4L1484.7 402.2L1485.0 402.9L1485.3 403.5L1485.5 404.0L1485.8 404.4L1486.1 404.8L1486.4 405.1L1486.7 405.3L1487.0 405.4L1487.2 405.5L1487.5 405.4L1487.8 405.3L1488.1 405.1L1488.4 404.8L1488.7 404.4L1488.9 404.0L1489.2 403.5L1489.5 402.9L1489.8 402.2L1490.1 401.4L1490.4 400.5L1490.6 399.6L1490.9 398.6L1491.2 397.5L1491.5 396.4L1491.8 395.2L1492.1 393.9L1492.3 392.5L1492.6 391.1L1492.9 389.6L1493.2 388.0L1493.5 386.4L1493.7 384.7L1494.0 382.9L1494.3 381.1L1494.6 379.2L1494.9 377.3L1495.2 375.3L1495.4 373.2L1495.7 371.1L1496.0 369.0L1496.3 366.8L1496.6 364.6L1496.9 362.3L1497.1 360.0L1497.4 357.7L1497.7 355.3L1498.0 352.8L1498.3 350.4L1498.6 347.9L1498.8 345.4L1499.1 342.9L1499.4 340.4L1499.7 337.8L1500.0 335.2L1500.2 332.6L1500.5 330.0L1500.8 327.4L1501.1 324.8L1501.4 322.2L1501.7 319.6L1501.9 317.0L1502.2 314.4L1502.5 311.8L1502.8 309.2L1503.1 306.6L1503.4 304.0L1503.6 301.5L1503.9 299.0L1504.2 296.5L1504.5 294.0L1504.8 291.5L1505.1 289.1L1505.3 286.7L1505.6 284.4L1505.9 282.1L1506.2 279.8L1506.5 277.6L1506.8 275.4L1507.0 273.2L1507.3 271.1L1507.6 269.1L1507.9 267.1L1508.2 265.2L1508.4 263.3L1508.7 261.5L1509.0 259.7L1509.3 258.0L1509.6 256.4L1509.9 254.8L1510.1 253.3L1510.4 251.9L1510.7 250.5L1511.0 249.2L1511.3 248.0L1511.6 246.8L1511.8 245.8L1512.1 244.8L1512.4 243.8L1512.7 243.0L1513.0 242.2L1513.3 241.5L1513.5 240.9L1513.8 240.4L1514.1 239.9L1514.4 239.6L1514.7 239.3L1514.9 239.1L1515.2 239.0L1515.5 238.9L1515.8 239.0L1516.1 239.1L1516.4 239.3L1516.6 239.6L1516.9 239.9L1517.2 240.4L1517.5 240.9L1517.8 241.5L1518.1 242.2L1518.3 243.0L1518.6 243.8L1518.9 244.8L1519.2 245.8L1519.5 246.8L1519.8 248.0L1520.0 249.2L1520.3 250.5L1520.6 251.9L1520.9 253.3L1521.2 254.8L1521.5 256.4L1521.7 258.0L1522.0 259.7L1522.3 261.5L1522.6 263.3L1522.9 265.2L1523.1 267.1L1523.4 269.1L1523.7 271.1L1524.0 273.2L1524.3 275.4L1524.6 277.6L1524.8 279.8L1525.1 282.1L1525.4 284.4L1525.7 286.7L1526.0 289.1L1526.3 291.5L1526.5 294.0L1526.8 296.5L1527.1 299.0L1527.4 301.5L1527.7 304.0L1528.0 306.6L1528.2 309.2L1528.5 311.8L1528.8 314.4L1529.1 317.0L1529.4 319.6L1529.7 322.2L1529.9 324.8L1530.2 327.4L1530.5 330.0L1530.8 332.6L1531.1 335.2L1531.3 337.8L1531.6 340.4L1531.9 342.9L1532.2 345.4L1532.5 347.9L1532.8 350.4L1533.0 352.8L1533.3 355.3L1533.6 357.7L1533.9 360.0L1534.2 362.3L1534.5 364.6L1534.7 366.8L1535.0 369.0L1535.3 371.1L1535.6 373.2L1535.9 375.3L1536.2 377.3L1536.4 379.2L1536.7 381.1L1537.0 382.9L1537.3 384.7L1537.6 386.4L1537.8 388.0L1538.1 389.6L1538.4 391.1L1538.7 392.5L1539.0 393.9L1539.3 395.2L1539.5 396.4L1539.8 397.5L1540.1 398.6L1540.4 399.6L1540.7 400.5L1541.0 401.4L1541.2 402.2L1541.5 402.9L1541.8 403.5L1542.1 404.0L1542.4 404.4L1542.7 404.8L1542.9 405.1L1543.2 405.3L1543.5 405.4L1543.8 405.5L1544.1 405.4L1544.4 405.3L1544.6 405.1L1544.9 404.8L1545.2 404.4L1545.5 404.0L1545.8 403.5L1546.0 402.9L1546.3 402.2L1546.6 401.4L1546.9 400.5L1547.2 399.6L1547.5 398.6L1547.7 397.5L1548.0 396.4L1548.3 395.2L1548.6 393.9L1548.9 392.5L1549.2 391.1L1549.4 389.6L1549.7 388.0L1550.0 386.4L1550.3 384.7L1550.6 382.9L1550.9 381.1L1551.1 379.2L1551.4 377.3L1551.7 375.3L1552.0 373.2L1552.3 371.1L1552.5 369.0L1552.8 366.8L1553.1 364.6L1553.4 362.3L1553.7 360.0L1554.0 357.7L1554.2 355.3L1554.5 352.8L1554.8 350.4L1555.1 347.9L1555.4 345.4L1555.7 342.9L1555.9 340.4L1556.2 337.8L1556.5 335.2L1556.8 332.6L1557.1 330.0L1557.4 327.4L1557.6 324.8L1557.9 322.2L1558.2 319.6L1558.5 317.0L1558.8 314.4L1559.1 311.8L1559.3 309.2L1559.6 306.6L1559.9 304.0L1560.2 301.5L1560.5 299.0L1560.7 296.5L1561.0 294.0L1561.3 291.5L1561.6 289.1L1561.9 286.7L1562.2 284.4L1562.4 282.1L1562.7 279.8L1563.0 277.6L1563.3 275.4L1563.6 273.2L1563.9 271.1L1564.1 269.1L1564.4 267.1L1564.7 265.2L1565.0 263.3L1565.3 261.5L1565.6 259.7L1565.8 258.0L1566.1 256.4L1566.4 254.8L1566.7 253.3L1567.0 251.9L1567.2 250.5L1567.5 249.2L1567.8 248.0L1568.1 246.8L1568.4 245.8L1568.7 244.8L1568.9 243.8L1569.2 243.0L1569.5 242.2L1569.8 241.5L1570.1 240.9L1570.4 240.4L1570.6 239.9L1570.9 239.6L1571.2 239.3L1571.5 239.1L1571.8 239.0L1572.1 238.9L1572.3 239.0L1572.6 239.1L1572.9 239.3L1573.2 239.6L1573.5 239.9L1573.8 240.4L1574.0 240.9L1574.3 241.5L1574.6 242.2L1574.9 243.0L1575.2 243.8L1575.4 244.8L1575.7 245.8L1576.0 246.8L1576.3 248.0L1576.6 249.2L1576.9 250.5L1577.1 251.9L1577.4 253.3L1577.7 254.8L1578.0 256.4L1578.3 258.0L1578.6 259.7L1578.8 261.5L1579.1 263.3L1579.4 265.2L1579.7 267.1L1580.0 269.1L1580.3 271.1L1580.5 273.2L1580.8 275.4L1581.1 277.6L1581.4 279.8L1581.7 282.1L1581.9 284.4L1582.2 286.7L1582.5 289.1L1582.8 291.5L1583.1 294.0L1583.4 296.5L1583.6 299.0L1583.9 301.5L1584.2 304.0L1584.5 306.6L1584.8 309.2L1585.1 311.8L1585.3 314.4L1585.6 317.0L1585.9 319.6L1586.2 322.2L1586.5 324.8L1586.8 327.4L1587.0 330.0L1587.3 332.6L1587.6 335.2L1587.9 337.8L1588.2 340.4L1588.5 342.9L1588.7 345.4L1589.0 347.9L1589.3 350.4L1589.6 352.8L1589.9 355.3L1590.1 357.7L1590.4 360.0L1590.7 362.3L1591.0 364.6L1591.3 366.8L1591.6 369.0L1591.8 371.1L1592.1 373.2L1592.4 375.3L1592.7 377.3L1593.0 379.2L1593.3 381.1L1593.5 382.9L1593.8 384.7L1594.1 386.4L1594.4 388.0L1594.7 389.6L1595.0 391.1L1595.2 392.5L1595.5 393.9L1595.8 395.2L1596.1 396.4L1596.4 397.5L1596.6 398.6L1596.9 399.6L1597.2 400.5L1597.5 401.4L1597.8 402.2L1598.1 402.9L1598.3 403.5L1598.6 404.0L1598.9 404.4L1599.2 404.8L1599.5 405.1L1599.8 405.3L1600.0 405.4L1600.3 405.5L1600.6 405.4L1600.9 405.3L1601.2 405.1L1601.5 404.8L1601.7 404.4L1602.0 404.0L1602.3 403.5L1602.6 402.9L1602.9 402.2L1603.2 401.4L1603.4 400.5L1603.7 399.6L1604.0 398.6L1604.3 397.5L1604.6 396.4L1604.8 395.2L1605.1 393.9L1605.4 392.5L1605.7 391.1L1606.0 389.6L1606.3 388.0L1606.5 386.4L1606.8 384.7L1607.1 382.9L1607.4 381.1L1607.7 379.2L1608.0 377.3L1608.2 375.3L1608.5 373.2L1608.8 371.1L1609.1 369.0L1609.4 366.8L1609.7 364.6L1609.9 362.3L1610.2 360.0L1610.5 357.7L1610.8 355.3L1611.1 352.8L1611.4 350.4L1611.6 347.9L1611.9 345.4L1612.2 342.9L1612.5 340.4L1612.8 337.8L1613.0 335.2L1613.3 332.6L1613.6 330.0L1613.9 327.4L1614.2 324.8L1614.5 322.2L1614.7 319.6L1615.0 317.0L1615.3 314.4L1615.6 311.8L1615.9 309.2L1616.2 306.6L1616.4 304.0L1616.7 301.5L1617.0 299.0L1617.3 296.5L1617.6 294.0L1617.9 291.5L1618.1 289.1L1618.4 286.7L1618.7 284.4L1619.0 282.1L1619.3 279.8L1619.5 277.6L1619.8 275.4L1620.1 273.2L1620.4 271.1L1620.7 269.1L1621.0 267.1L1621.2 265.2L1621.5 263.3L1621.8 261.5L1622.1 259.7L1622.4 258.0L1622.7 256.4L1622.9 254.8L1623.2 253.3L1623.5 251.9L1623.8 250.5L1624.1 249.2L1624.4 248.0L1624.6 246.8L1624.9 245.8L1625.2 244.8L1625.5 243.8L1625.8 243.0L1626.1 242.2L1626.3 241.5L1626.6 240.9L1626.9 240.4L1627.2 239.9L1627.5 239.6L1627.7 239.3L1628.0 239.1L1628.3 239.0L1628.6 238.9L1628.9 239.0L1629.2 239.1L1629.4 239.3L1629.7 239.6L1630.0 239.9L1630.3 240.4L1630.6 240.9L1630.9 241.5L1631.1 242.2L1631.4 243.0L1631.7 243.8L1632.0 244.8L1632.3 245.8L1632.6 246.8L1632.8 248.0L1633.1 249.2L1633.4 250.5L1633.7 251.9L1634.0 253.3L1634.2 254.8L1634.5 256.4L1634.8 258.0L1635.1 259.7L1635.4 261.5L1635.7 263.3L1635.9 265.2L1636.2 267.1L1636.5 269.1L1636.8 271.1L1637.1 273.2L1637.4 275.4L1637.6 277.6L1637.9 279.8L1638.2 282.1L1638.5 284.4L1638.8 286.7L1639.1 289.1L1639.3 291.5L1639.6 294.0L1639.9 296.5L1640.2 299.0L1640.5 301.5L1640.8 304.0L1641.0 306.6L1641.3 309.2L1641.6 311.8L1641.9 314.4L1642.2 317.0L1642.4 319.6L1642.7 322.2L1643.0 324.8L1643.3 327.4L1643.6 330.0L1643.9 332.6L1644.1 335.2L1644.4 337.8L1644.7 340.4L1645.0 342.9L1645.3 345.4L1645.6 347.9L1645.8 350.4L1646.1 352.8L1646.4 355.3L1646.7 357.7L1647.0 360.0L1647.3 362.3L1647.5 364.6L1647.8 366.8L1648.1 369.0L1648.4 371.1L1648.7 373.2L1648.9 375.3L1649.2 377.3L1649.5 379.2L1649.8 381.1L1650.1 382.9L1650.4 384.7L1650.6 386.4L1650.9 388.0L1651.2 389.6L1651.5 391.1L1651.8 392.5L1652.1 393.9L1652.3 395.2L1652.6 396.4L1652.9 397.5L1653.2 398.6L1653.5 399.6L1653.8 400.5L1654.0 401.4L1654.3 402.2L1654.6 402.9L1654.9 403.5L1655.2 404.0L1655.5 404.4L1655.7 404.8L1656.0 405.1L1656.3 405.3L1656.6 405.4L1656.9 405.5L1657.1 405.4L1657.4 405.3L1657.7 405.1L1658.0 404.8L1658.3 404.4L1658.6 404.0L1658.8 403.5L1659.1 402.9L1659.4 402.2L1659.7 401.4L1660.0 400.5L1660.3 399.6L1660.5 398.6L1660.8 397.5L1661.1 396.4L1661.4 395.2L1661.7 393.9L1662.0 392.5L1662.2 391.1L1662.5 389.6L1662.8 388.0L1663.1 386.4L1663.4 384.7L1663.6 382.9L1663.9 381.1L1664.2 379.2L1664.5 377.3L1664.8 375.3L1665.1 373.2L1665.3 371.1L1665.6 369.0L1665.9 366.8L1666.2 364.6L1666.5 362.3L1666.8 360.0L1667.0 357.7L1667.3 355.3L1667.6 352.8L1667.9 350.4L1668.2 347.9L1668.5 345.4L1668.7 342.9L1669.0 340.4L1669.3 337.8L1669.6 335.2L1669.9 332.6L1670.2 330.0L1670.4 327.4L1670.7 324.8" stroke="#f4f4f4" stroke-width="1.35" fill="none"/>
<path d="M1378 413.8H1387M1388.3 415V421M1378 372.2H1387M1444.8 415V421M1378 330.5H1387M1501.4 415V421M1378 288.9H1387M1557.9 415V421M1378 247.2H1387M1614.5 415V421M1378 205.6H1387M1671.0 415V421" stroke="#222" stroke-width="1.3"/>
</svg>
<div class="lvlab" style="left:1277px;width:100px;text-align:right;top:406.3px;font-size:14.8px;letter-spacing:-0.5px">0</div>
<div class="lvlab" style="left:1277px;width:100px;text-align:right;top:364.7px;font-size:14.8px;letter-spacing:-0.5px">500</div>
<div class="lvlab" style="left:1277px;width:100px;text-align:right;top:323.0px;font-size:14.8px;letter-spacing:-0.5px">1000</div>
<div class="lvlab" style="left:1277px;width:100px;text-align:right;top:281.4px;font-size:14.8px;letter-spacing:-0.5px">1500</div>
<div class="lvlab" style="left:1277px;width:100px;text-align:right;top:239.7px;font-size:14.8px;letter-spacing:-0.5px">2000</div>
<div class="lvlab" style="left:1277px;width:100px;text-align:right;top:198.1px;font-size:14.8px;letter-spacing:-0.5px">2500</div>
<div class="lvlab" style="left:1358.3px;width:60px;text-align:center;top:425px;font-size:14.8px;letter-spacing:-0.4px">0</div>
<div class="lvlab" style="left:1414.8px;width:60px;text-align:center;top:425px;font-size:14.8px;letter-spacing:-0.4px">200</div>
<div class="lvlab" style="left:1471.4px;width:60px;text-align:center;top:425px;font-size:14.8px;letter-spacing:-0.4px">400</div>
<div class="lvlab" style="left:1527.9px;width:60px;text-align:center;top:425px;font-size:14.8px;letter-spacing:-0.4px">600</div>
<div class="lvlab" style="left:1584.5px;width:60px;text-align:center;top:425px;font-size:14.8px;letter-spacing:-0.4px">800</div>
<div class="lvlab" style="left:1641.0px;width:60px;text-align:center;top:425px;font-size:14.8px;letter-spacing:-0.4px">1000</div>
<div class="lvlab" style="left:1501.5px;top:447.1px;font-size:14.5px;color:#1a1a1a;transform:scaleX(0.948);transform-origin:0 0;">Samples</div>
<div class="lvlab" style="left:1296px;top:303px;font-size:14.5px;transform:rotate(-90deg);transform-origin:39px 7px;width:78px">Amplitude</div>
<div class="a" style="left:1577.0px;top:163.0px;width:123.0px;height:26.0px;background:linear-gradient(90deg,#c8c8c8,#d8d8d8 20%,#c8c8c8 80%,#9c9c9c);box-shadow:inset 0 -2px 0 #a8a8a8"></div>
<div class="lvlab" style="left:1596.5px;top:170.7px;font-size:14.5px;color:#1a1a1a;transform:scaleX(1.009);transform-origin:0 0;">Plot 0</div>
<div class="a" style="left:1647.6px;top:166.0px;width:34.4px;height:20.0px;background:#000"></div>
<svg style="left:1649px;top:168px" width="32" height="16"><path d="M1 13L10 3L21 13L31 3" stroke="#eee" stroke-width="1.2" fill="none"/></svg>
<div class="lvlab" style="left:1716.0px;top:181.0px;font-size:13.2px;color:#1a1a1a;transform:scaleX(0.988);transform-origin:0 0;">Sample Rate</div>
<div class="a" style="left:1720.0px;top:202.6px;width:97.0px;height:34.8px;border-radius:6px;background:rgba(0,0,0,0.12)"></div>
<div class="a" style="left:1718.0px;top:200.6px;width:97.0px;height:34.8px;border-radius:6px;background:linear-gradient(#f6f6f6,#e2e2e2);border:1px solid #a8a8a8;box-shadow:inset 0 1px 0 #fff"></div>
<div class="a" style="left:1725.0px;top:207.3px;width:82.3px;height:20.7px;background:#fcfcfc;border:1px solid #8c8c8c;box-shadow:inset 1px 1px 0 #9a9a9a, inset 0 -1px 0 #e8e8e8"></div>
<div class="lvlab" style="left:1730.0px;top:210.6px;font-size:14.5px;color:#1a1a1a;">100000</div>
<svg style="left:0;top:0" width="1" height="1"><ellipse cx="1199.0" cy="495.5" rx="8.0" ry="16.5" fill="#b4b4b4" stroke="#8e8e8e" stroke-width="1"/><ellipse cx="1198.0" cy="495.5" rx="4.8" ry="14.0" fill="#cacaca"/><path d="M1196.0 492.5L1199.0 483.0L1201.0 492.5M1196.0 498.5L1199.0 508.0L1201.0 498.5M1193.0 495.5H1205.0" stroke="#8a8a8a" stroke-width="1" fill="none"/></svg>
<div class="a" style="left:1211.0px;top:487.0px;width:25.0px;height:21.0px;background:#fcfcfc"></div>
<div class="lvlab" style="left:1214.0px;top:490.7px;font-size:14.5px;color:#1a1a1a;">0</div>
<svg style="left:0;top:0" width="1" height="1"><ellipse cx="1199.0" cy="530.5" rx="8.0" ry="16.5" fill="#b4b4b4" stroke="#8e8e8e" stroke-width="1"/><ellipse cx="1198.0" cy="530.5" rx="4.8" ry="14.0" fill="#cacaca"/><path d="M1196.0 527.5L1199.0 518.0L1201.0 527.5M1196.0 533.5L1199.0 543.0L1201.0 533.5M1193.0 530.5H1205.0" stroke="#8a8a8a" stroke-width="1" fill="none"/></svg>
<div class="a" style="left:1211.0px;top:521.7px;width:25.0px;height:20.9px;background:#fcfcfc"></div>
<div class="lvlab" style="left:1214.0px;top:525.7px;font-size:14.5px;color:#1a1a1a;">0</div>
<div class="a" style="left:1239.5px;top:483.5px;width:415.5px;height:67.0px;background:#e2e2e2;border:1px solid #d0d0d0;box-shadow:inset 3px 3px 0 #f2f2f2, inset -2px -2px 0 #c8c8c8"></div>
<div class="a" style="left:1245.0px;top:488.0px;width:66.0px;height:28.0px;background:#c4c4c4"></div>
<div class="a" style="left:1249.0px;top:491.3px;width:59.0px;height:21.7px;background:#cfcfcf;box-shadow:inset 1px 1px 0 #b4b4b4"></div>
<div class="lvlab" style="left:1252.0px;top:496.0px;font-size:14.2px;color:#1a1a1a;">1100</div>
<div class="a" style="left:1245.0px;top:518.0px;width:66.0px;height:29.0px;background:#d6d6d6"></div>
<div class="a" style="left:1249.0px;top:521.0px;width:59.0px;height:23.0px;background:#dadada;box-shadow:inset 1px 1px 0 #c6c6c6"></div>
<div class="lvlab" style="left:1252.0px;top:526.5px;font-size:14.2px;color:#9a9a9a;">0</div>
<div class="a" style="left:1312.9px;top:488.0px;width:66.0px;height:28.0px;background:#c4c4c4"></div>
<div class="a" style="left:1316.9px;top:491.3px;width:59.0px;height:21.7px;background:#cfcfcf;box-shadow:inset 1px 1px 0 #b4b4b4"></div>
<div class="lvlab" style="left:1319.9px;top:496.0px;font-size:14.2px;color:#1a1a1a;">1131</div>
<div class="a" style="left:1312.9px;top:518.0px;width:66.0px;height:29.0px;background:#d6d6d6"></div>
<div class="a" style="left:1316.9px;top:521.0px;width:59.0px;height:23.0px;background:#dadada;box-shadow:inset 1px 1px 0 #c6c6c6"></div>
<div class="lvlab" style="left:1319.9px;top:526.5px;font-size:14.2px;color:#9a9a9a;">0</div>
<div class="a" style="left:1379.8px;top:488.0px;width:66.0px;height:28.0px;background:#c4c4c4"></div>
<div class="a" style="left:1383.8px;top:491.3px;width:59.0px;height:21.7px;background:#cfcfcf;box-shadow:inset 1px 1px 0 #b4b4b4"></div>
<div class="lvlab" style="left:1386.8px;top:496.0px;font-size:14.2px;color:#1a1a1a;">1163</div>
<div class="a" style="left:1379.8px;top:518.0px;width:66.0px;height:29.0px;background:#d6d6d6"></div>
<div class="a" style="left:1383.8px;top:521.0px;width:59.0px;height:23.0px;background:#dadada;box-shadow:inset 1px 1px 0 #c6c6c6"></div>
<div class="lvlab" style="left:1386.8px;top:526.5px;font-size:14.2px;color:#9a9a9a;">0</div>
<div class="a" style="left:1447.7px;top:488.0px;width:66.0px;height:28.0px;background:#c4c4c4"></div>
<div class="a" style="left:1451.7px;top:491.3px;width:59.0px;height:21.7px;background:#cfcfcf;box-shadow:inset 1px 1px 0 #b4b4b4"></div>
<div class="lvlab" style="left:1454.7px;top:496.0px;font-size:14.2px;color:#1a1a1a;">1194</div>
<div class="a" style="left:1447.7px;top:518.0px;width:66.0px;height:29.0px;background:#d6d6d6"></div>
<div class="a" style="left:1451.7px;top:521.0px;width:59.0px;height:23.0px;background:#dadada;box-shadow:inset 1px 1px 0 #c6c6c6"></div>
<div class="lvlab" style="left:1454.7px;top:526.5px;font-size:14.2px;color:#9a9a9a;">0</div>
<div class="a" style="left:1516.0px;top:488.0px;width:66.0px;height:28.0px;background:#c4c4c4"></div>
<div class="a" style="left:1520.0px;top:491.3px;width:59.0px;height:21.7px;background:#cfcfcf;box-shadow:inset 1px 1px 0 #b4b4b4"></div>
<div class="lvlab" style="left:1523.0px;top:496.0px;font-size:14.2px;color:#1a1a1a;">1225</div>
<div class="a" style="left:1516.0px;top:518.0px;width:66.0px;height:29.0px;background:#d6d6d6"></div>
<div class="a" style="left:1520.0px;top:521.0px;width:59.0px;height:23.0px;background:#dadada;box-shadow:inset 1px 1px 0 #c6c6c6"></div>
<div class="lvlab" style="left:1523.0px;top:526.5px;font-size:14.2px;color:#9a9a9a;">0</div>
<div class="a" style="left:1584.0px;top:488.0px;width:66.0px;height:28.0px;background:#c4c4c4"></div>
<div class="a" style="left:1588.0px;top:491.3px;width:59.0px;height:21.7px;background:#cfcfcf;box-shadow:inset 1px 1px 0 #b4b4b4"></div>
<div class="lvlab" style="left:1591.0px;top:496.0px;font-size:14.2px;color:#1a1a1a;">1256</div>
<div class="a" style="left:1584.0px;top:518.0px;width:66.0px;height:29.0px;background:#d6d6d6"></div>
<div class="a" style="left:1588.0px;top:521.0px;width:59.0px;height:23.0px;background:#dadada;box-shadow:inset 1px 1px 0 #c6c6c6"></div>
<div class="lvlab" style="left:1591.0px;top:526.5px;font-size:14.2px;color:#9a9a9a;">0</div>
<div class="lvlab" style="left:1716.4px;top:465.2px;font-size:13.2px;color:#1a1a1a;transform:scaleX(1.013);transform-origin:0 0;">Max Voltage</div>
<div class="a" style="left:1720.0px;top:486.7px;width:96.0px;height:34.5px;border-radius:6px;background:rgba(0,0,0,0.12)"></div>
<div class="a" style="left:1718.0px;top:484.7px;width:96.0px;height:34.5px;border-radius:6px;background:linear-gradient(#f6f6f6,#e2e2e2);border:1px solid #a8a8a8;box-shadow:inset 0 1px 0 #fff"></div>
<div class="a" style="left:1724.2px;top:490.8px;width:83.8px;height:22.2px;background:#fcfcfc;border:1px solid #8c8c8c;box-shadow:inset 1px 1px 0 #9a9a9a, inset 0 -1px 0 #e8e8e8"></div>
<div class="lvlab" style="left:1729.5px;top:494.8px;font-size:14.5px;color:#1a1a1a;">10</div>
<div class="lvlab" style="left:1716.4px;top:541.3px;font-size:13.2px;color:#1a1a1a;transform:scaleX(0.984);transform-origin:0 0;">Min Voltage</div>
<div class="a" style="left:1720.0px;top:562.7px;width:96.0px;height:39.3px;border-radius:6px;background:rgba(0,0,0,0.12)"></div>
<div class="a" style="left:1718.0px;top:560.7px;width:96.0px;height:39.3px;border-radius:6px;background:linear-gradient(#f6f6f6,#e2e2e2);border:1px solid #a8a8a8;box-shadow:inset 0 1px 0 #fff"></div>
<div class="a" style="left:1724.2px;top:567.0px;width:83.8px;height:28.0px;background:#fcfcfc;border:1px solid #8c8c8c;box-shadow:inset 1px 1px 0 #9a9a9a, inset 0 -1px 0 #e8e8e8"></div>
<div class="lvlab" style="left:1729.5px;top:573.9px;font-size:14.5px;color:#1a1a1a;">-10</div>
<div class="lvlab" style="left:1295.0px;top:573.1px;font-size:13.2px;color:#1a1a1a;transform:scaleX(0.987);transform-origin:0 0;">Physical Channel(s)</div>
<div class="a" style="left:1420.6px;top:561.0px;width:290.6px;height:41.0px;border-radius:6px;background:rgba(0,0,0,0.12)"></div>
<div class="a" style="left:1418.6px;top:559.0px;width:290.6px;height:41.0px;border-radius:6px;background:linear-gradient(#f6f6f6,#e2e2e2);border:1px solid #a8a8a8;box-shadow:inset 0 1px 0 #fff"></div>
<div class="a" style="left:1427.3px;top:564.3px;width:254.2px;height:33.7px;background:#fff;border:1px solid #8c8c8c;box-shadow:inset 1px 1px 0 #b0b0b0"></div>
<div class="a" style="left:1428.3px;top:565.3px;width:13.0px;height:31.7px;background:#dcdcdc"></div>
<svg style="left:1428.3px;top:566.3px" width="13" height="20"><text x="1" y="9" font-size="9" font-family="Liberation Serif" fill="#777">I</text><path d="M2 17L10 5" stroke="#888" stroke-width="0.8"/><text x="6" y="18" font-size="9" font-family="Liberation Serif" fill="#777">0</text></svg>
<div class="lvlab" style="left:1442.3px;top:574.2px;font-size:14.5px;color:#1a1a1a;transform:scaleX(0.934);transform-origin:0 0;">6723/ao10</div>
<div class="a" style="left:1687.6px;top:568.6px;width:15.0px;height:16.0px;border:1px solid #9a9a9a;border-radius:3px;background:linear-gradient(#fdfdfd,#e4e4e4)"></div>
<svg style="left:1691.6px;top:574.6px" width="8" height="5"><path d="M0 0H7L3.5 4Z" fill="#555"/></svg>
<div class="a" style="left:1846.0px;top:91.0px;width:17.0px;height:501.0px;background:#f0f0f0"></div>
<div class="a" style="left:1847.0px;top:170.0px;width:16.0px;height:222.0px;background:#cdcdcd"></div>
<svg style="left:1848px;top:98px" width="13" height="10"><path d="M1.5 7.5L6.5 2.5L11.5 7.5" stroke="#555" stroke-width="1.6" fill="none"/></svg>
<svg style="left:1848px;top:576px" width="13" height="10"><path d="M1.5 2.5L6.5 7.5L11.5 2.5" stroke="#555" stroke-width="1.6" fill="none"/></svg>
<div class="a" style="left:1177.0px;top:592.0px;width:686.0px;height:20.0px;background:#f0f0f0"></div>
<div class="a" style="left:1177.7px;top:592.0px;width:282.6px;height:20.2px;background:#fff;border:1px solid #111"></div>
<div class="lvlab" style="left:1181.0px;top:594.4px;font-size:14.3px;color:#111;transform:scaleX(1.032);transform-origin:0 0;">Benchmark Project_junk1.lvproj/RT Target</div>
<div class="a" style="left:1503.6px;top:592.5px;width:83.4px;height:19.0px;background:#cdcdcd"></div>
<svg style="left:1466px;top:596px" width="10" height="13"><path d="M7.5 1.5L2.5 6.5L7.5 11.5" stroke="#555" stroke-width="1.6" fill="none"/></svg>
<svg style="left:1831px;top:596px" width="10" height="13"><path d="M2.5 1.5L7.5 6.5L2.5 11.5" stroke="#555" stroke-width="1.6" fill="none"/></svg>
<svg style="left:1850px;top:598px" width="12" height="12"><path d="M10 2h1M7 5h1M10 5h1M4 8h1M7 8h1M10 8h1" stroke="#aaa" stroke-width="1.5"/></svg>
</body></html>
